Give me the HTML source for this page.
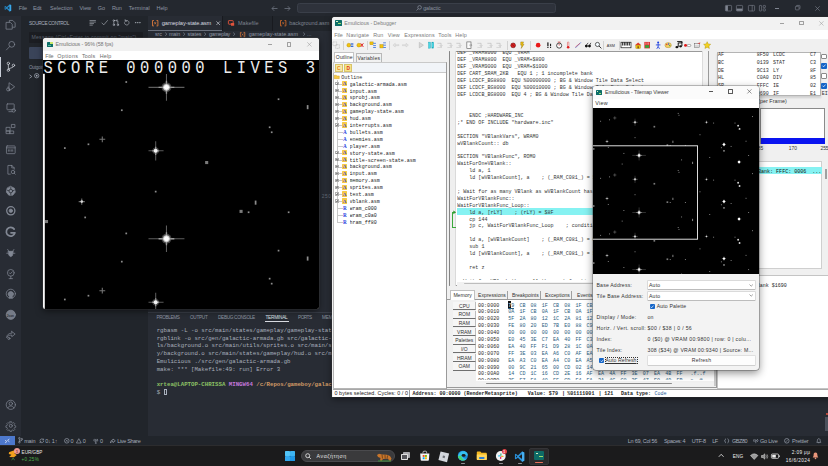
<!DOCTYPE html>
<html lang="en"><head><meta charset="utf-8"><title>Emulicious debugging - galactic-armada</title>
<style>
html,body{margin:0;padding:0;}
body{width:828px;height:466px;overflow:hidden;position:relative;background:#282c34;font-family:"Liberation Sans",sans-serif;}
#root{position:absolute;left:0;top:0;width:828px;height:466px;overflow:hidden;}
#root div,#root span,#root svg{position:absolute;display:block;white-space:pre;box-sizing:border-box;}
#root svg{overflow:visible;}
#root svg text{white-space:pre;}
.clip{overflow:hidden;}
</style></head><body><div id="root">
<div style="left:0px;top:0px;width:828px;height:466px;background:#282c34;"></div>
<div style="left:0px;top:0px;width:828px;height:16px;background:#24282f;"></div>
<div style="left:0px;top:16px;width:21px;height:420px;background:#282c34;"></div>
<div style="left:21px;top:16px;width:127px;height:420px;background:#21252b;"></div>
<div style="left:148px;top:16px;width:680px;height:14.5px;background:#21252b;"></div>
<div style="left:148px;top:30.5px;width:680px;height:8px;background:#282c34;"></div>
<svg style="left:4px;top:3.9px;" width="7.8" height="7.8" viewBox="0 0 24 24"><path d="M17.2 1.2 8.3 9.4 4 6.1 2 7.1v9.8l2 1 4.3-3.3 8.9 8.2 4.8-2V3.2z" fill="#2489ca"/><path d="M17.2 6.8 10.6 12l6.6 5.2zM4.2 9.3v5.4L7 12z" fill="#24282f"/><path d="M17.2 1.2 22 3.2v17.6l-4.8 2z" fill="#3aa8ea"/></svg>
<span style="top:4.99px;line-height:7.15px;height:7.15px;font-size:5.5px;color:#8e95a3;letter-spacing:-0.19px;left:18.8px;">File</span>
<span style="top:4.99px;line-height:7.15px;height:7.15px;font-size:5.5px;color:#8e95a3;letter-spacing:-0.29px;left:33px;">Edit</span>
<span style="top:4.99px;line-height:7.15px;height:7.15px;font-size:5.5px;color:#8e95a3;letter-spacing:-0.01px;left:50px;">Selection</span>
<span style="top:4.99px;line-height:7.15px;height:7.15px;font-size:5.5px;color:#8e95a3;letter-spacing:-0.08px;left:79.5px;">View</span>
<span style="top:4.99px;line-height:7.15px;height:7.15px;font-size:5.5px;color:#8e95a3;letter-spacing:-0.17px;left:97.8px;">Go</span>
<span style="top:4.99px;line-height:7.15px;height:7.15px;font-size:5.5px;color:#8e95a3;letter-spacing:-0.2px;left:112px;">Run</span>
<span style="top:4.99px;line-height:7.15px;height:7.15px;font-size:5.5px;color:#8e95a3;letter-spacing:0.03px;left:128.8px;">Terminal</span>
<span style="top:4.99px;line-height:7.15px;height:7.15px;font-size:5.5px;color:#8e95a3;letter-spacing:-0.08px;left:156.5px;">Help</span>
<svg style="left:270.5px;top:4.5px;" width="7" height="7" viewBox="0 0 7 7"><path d="M6.5 3.5H1M3.2 1.2 1 3.5l2.2 2.3" fill="none" stroke="#6d7380" stroke-width=".8"/></svg>
<svg style="left:283.5px;top:4.5px;" width="7" height="7" viewBox="0 0 7 7"><path d="M.5 3.5H6M3.8 1.2 6 3.5 3.8 5.8" fill="none" stroke="#6d7380" stroke-width=".8"/></svg>
<div style="left:297px;top:2.6px;width:258.5px;height:10.6px;background:#2e323b;border-radius:2.6px;border:.5px solid #3a3f49;"></div>
<svg style="left:416.4px;top:5px;" width="6" height="6" viewBox="0 0 6 6"><circle cx="3.6" cy="2.4" r="1.8" fill="none" stroke="#8b92a0" stroke-width=".7"/><path d="M2.3 3.7.5 5.5" stroke="#8b92a0" stroke-width=".7"/></svg>
<span style="top:4.99px;line-height:6.89px;height:6.89px;font-size:5.3px;color:#8b92a0;letter-spacing:-0.06px;left:423.2px;">galactic</span>
<svg style="left:725.2px;top:4.6px;" width="7" height="6.6" viewBox="0 0 7 6.6"><rect x=".4" y=".4" width="6.2" height="5.6" rx=".8" fill="none" stroke="#7f8591" stroke-width=".6"/><rect x=".6" y=".6" width="2.3" height="5.2" fill="#7f8591"/></svg>
<svg style="left:736.4px;top:4.6px;" width="7" height="6.6" viewBox="0 0 7 6.6"><rect x=".4" y=".4" width="6.2" height="5.6" rx=".8" fill="none" stroke="#7f8591" stroke-width=".6"/><rect x=".6" y="3.6" width="5.8" height="2.2" fill="#7f8591"/></svg>
<svg style="left:747.6px;top:4.6px;" width="7" height="6.6" viewBox="0 0 7 6.6"><rect x=".4" y=".4" width="6.2" height="5.6" rx=".8" fill="none" stroke="#7f8591" stroke-width=".6"/><path d="M4.2.4v5.8" stroke="#7f8591" stroke-width=".6"/></svg>
<svg style="left:758.8px;top:4.6px;" width="7" height="6.6" viewBox="0 0 7 6.6"><rect x=".4" y=".4" width="2.2" height="5.6" rx=".5" fill="none" stroke="#7f8591" stroke-width=".6"/><rect x="4.2" y=".4" width="2.2" height="2.2" rx=".5" fill="none" stroke="#7f8591" stroke-width=".6"/><rect x="4.2" y="3.8" width="2.2" height="2.2" rx=".5" fill="none" stroke="#7f8591" stroke-width=".6"/></svg>
<div style="left:774.8px;top:7.8px;width:4.6px;height:0.6px;background:#7f8591;"></div>
<svg style="left:794.8px;top:5.2px;" width="5.4" height="5.4" viewBox="0 0 5.4 5.4"><rect x=".4" y="1.3" width="3.6" height="3.6" rx=".6" fill="none" stroke="#7f8591" stroke-width=".6"/><path d="M1.5 1.3V.9q0-.5.5-.5h2.5q.5 0 .5.5v2.5q0 .5-.5.5H4.100" fill="none" stroke="#7f8591" stroke-width=".6"/></svg>
<svg style="left:815px;top:5.5px;" width="5" height="5" viewBox="0 0 5 5"><path d="M.3.3 4.7 4.7M4.7.3.3 4.7" stroke="#7f8591" stroke-width=".6"/></svg>
<svg style="left:4.5px;top:19.2px;" width="11.6" height="11.6" viewBox="0 0 24 24"><g fill="none" stroke="#828894" stroke-width="1.5" stroke-linejoin="round" stroke-linecap="round"><path d="M9 6V3h7l5 5v9h-5"/><path d="M3 7h8l4 4v10H3z"/></g></svg>
<svg style="left:4.5px;top:40.2px;" width="11.6" height="11.6" viewBox="0 0 24 24"><g fill="none" stroke="#828894" stroke-width="1.5" stroke-linejoin="round" stroke-linecap="round"><circle cx="14" cy="9" r="6"/><path d="M9.8 13.4 3 20.5"/></g></svg>
<div style="left:0px;top:56.5px;width:1px;height:20.5px;background:#c9ced8;"></div>
<svg style="left:4.5px;top:60.7px;" width="11.6" height="11.6" viewBox="0 0 24 24"><g fill="none" stroke="#d3d7df" stroke-width="1.5" stroke-linejoin="round" stroke-linecap="round"><circle cx="7" cy="5" r="2.5"/><circle cx="7" cy="19" r="2.5"/><circle cx="17.5" cy="9" r="2.5"/><path d="M7 7.5v9M17.5 11.500c0 4-10.500 2-10.500 6"/></g></svg>
<svg style="left:4.5px;top:81.2px;" width="11.6" height="11.6" viewBox="0 0 24 24"><g fill="none" stroke="#828894" stroke-width="1.5" stroke-linejoin="round" stroke-linecap="round"><path d="M9 4l11 8-11 8z"/><circle cx="6.500" cy="17.500" r="3.200"/><path d="M6.500 14.300V12"/></g></svg>
<svg style="left:4.5px;top:102.2px;" width="11.6" height="11.6" viewBox="0 0 24 24"><g fill="none" stroke="#828894" stroke-width="1.5" stroke-linejoin="round" stroke-linecap="round"><rect x="4" y="4" width="15" height="12" rx="1"/><path d="M8 20h7"/><circle cx="18" cy="17.500" r="3.500"/></g></svg>
<svg style="left:4.5px;top:123.2px;" width="11.6" height="11.6" viewBox="0 0 24 24"><g fill="none" stroke="#828894" stroke-width="1.5" stroke-linejoin="round" stroke-linecap="round"><path d="M3 9h7.500v7.500H3zM3 16.500h7.500V22H3zM10.500 16.500H18V22h-7.500z"/><rect x="14" y="3" width="6.500" height="6.500"/></g></svg>
<svg style="left:4.5px;top:143.7px;" width="11.6" height="11.6" viewBox="0 0 24 24"><g fill="none" stroke="#828894" stroke-width="1.5" stroke-linejoin="round" stroke-linecap="round"><rect x="3" y="4" width="18" height="16" rx="1.500"/><path d="M3 8h18M7 15v-3M10 15v-3M13 15v-3M16 15v-3"/></g></svg>
<svg style="left:4.5px;top:164.2px;" width="11.6" height="11.6" viewBox="0 0 24 24"><g fill="none" stroke="#828894" stroke-width="1.5" stroke-linejoin="round" stroke-linecap="round"><path d="M14 3H6v18h5M14 3l5 5v3M14 3v5h5"/><circle cx="16.500" cy="16.500" r="3.500"/><path d="M19 19l2.200 2.200"/></g></svg>
<svg style="left:4.5px;top:185.2px;" width="11.6" height="11.6" viewBox="0 0 24 24"><g fill="none" stroke="#828894" stroke-width="1.5" stroke-linejoin="round" stroke-linecap="round"><path d="M12 3l7.500 3.700 1.800 8-5.100 6.300H7.800L2.700 14.700l1.800-8z" fill="#828894"/><circle cx="12" cy="12.500" r="3.800" stroke="#282c34"/><path d="M12 5v4M12 16v4M5 11l3.500 1M19 11l-3.500 1" stroke="#282c34"/></g></svg>
<svg style="left:4.5px;top:205.2px;" width="11.6" height="11.6" viewBox="0 0 24 24"><g fill="none" stroke="#828894" stroke-width="1.5" stroke-linejoin="round" stroke-linecap="round"><circle cx="12" cy="12" r="8.500" stroke-width="2.600"/><circle cx="12" cy="12" r="3.600" fill="#828894"/></g></svg>
<svg style="left:4.5px;top:225.7px;" width="11.6" height="11.6" viewBox="0 0 24 24"><g fill="none" stroke="#828894" stroke-width="1.5" stroke-linejoin="round" stroke-linecap="round"><path d="M19 6.500A9 9 0 1 0 20.500 14H12.500" stroke-width="3.600"/></g></svg>
<svg style="left:4.5px;top:247.2px;" width="11.6" height="11.6" viewBox="0 0 24 24"><g fill="none" stroke="#828894" stroke-width="1.5" stroke-linejoin="round" stroke-linecap="round"><path d="M7 9h10l-1.500 8.500L12 20l-3.500-2.500z" fill="#828894"/><path d="M8 9 5.500 5M16 9l2.500-4M7 13H3.500M17 13h3.500"/></g></svg>
<svg style="left:4.5px;top:267.7px;" width="11.6" height="11.6" viewBox="0 0 24 24"><g fill="none" stroke="#828894" stroke-width="1.5" stroke-linejoin="round" stroke-linecap="round"><circle cx="12" cy="10" r="7"/><path d="M9 10l2 2.200 4-4.400M12 17v5M8.500 22h7"/></g></svg>
<svg style="left:4.5px;top:288.2px;" width="11.6" height="11.6" viewBox="0 0 24 24"><g fill="none" stroke="#828894" stroke-width="1.5" stroke-linejoin="round" stroke-linecap="round"><circle cx="12" cy="12" r="9.500"/><path d="M9 21v-4c-1.500-1-2.500-2.500-2.500-4.500 0-3 2.500-5 5.500-5s5.500 2 5.500 5c0 2-1 3.500-2.500 4.500v4" fill="#757b87"/></g></svg>
<svg style="left:4.5px;top:309.2px;" width="11.6" height="11.6" viewBox="0 0 24 24"><g fill="none" stroke="#828894" stroke-width="1.5" stroke-linejoin="round" stroke-linecap="round"><circle cx="12" cy="12" r="9.500" fill="#757b87"/></g></svg>
<span style="top:314.5px;line-height:3.9px;height:3.9px;font-size:3px;color:#282c34;font-weight:700;left:6.8px;">Json</span>
<svg style="left:4.5px;top:329.2px;" width="11.6" height="11.6" viewBox="0 0 24 24"><g fill="none" stroke="#828894" stroke-width="1.5" stroke-linejoin="round" stroke-linecap="round"><path d="M14 5l7 5.500-7 5.500v-3.500c-6 0-9 2-10.500 5.500C3.500 12 8 8.500 14 8.500z"/><circle cx="8" cy="19.500" r="2.300"/></g></svg>
<svg style="left:4.5px;top:398.7px;" width="11.6" height="11.6" viewBox="0 0 24 24"><g fill="none" stroke="#828894" stroke-width="1.5" stroke-linejoin="round" stroke-linecap="round"><circle cx="12" cy="12" r="9.500"/><circle cx="12" cy="9.500" r="3.500"/><path d="M5.500 18.500c1.500-3 4-4 6.500-4s5 1 6.500 4"/></g></svg>
<svg style="left:4.5px;top:419.5px;" width="11.6" height="11.6" viewBox="0 0 24 24"><g fill="none" stroke="#828894" stroke-width="1.5" stroke-linejoin="round" stroke-linecap="round"><circle cx="12" cy="12" r="3.200"/><path d="M10.300 2.500h3.400l.6 2.700 2.100.9 2.400-1.500 2.400 2.400-1.500 2.400.9 2.100 2.700.6v3.400l-2.700.6-.9 2.100 1.500 2.400-2.400 2.400-2.400-1.500-2.100.9-.6 2.700h-3.400l-.6-2.700-2.100-.9-2.400 1.500-2.400-2.400 1.500-2.400-.9-2.100-2.700-.600v-3.400l2.700-.6.9-2.100-1.500-2.400 2.400-2.400 2.400 1.500 2.100-.9z" transform="translate(1.200 1.200) scale(.9)"/></g></svg>
<span style="top:21.19px;line-height:6.24px;height:6.24px;font-size:4.8px;color:#a7aebb;letter-spacing:-0.38px;left:29px;">SOURCE CONTROL</span>
<svg style="left:89.3px;top:19.4px;" width="7.4" height="7.4" viewBox="0 0 24 24"><g fill="none" stroke="#c0c5ce" stroke-width="1.8" stroke-linecap="round" stroke-linejoin="round"><path d="M3 5h18M3 10h18M3 15h12M3 20h8"/></g></svg>
<svg style="left:100.6px;top:19.4px;" width="7.4" height="7.4" viewBox="0 0 24 24"><g fill="none" stroke="#c0c5ce" stroke-width="1.8" stroke-linecap="round" stroke-linejoin="round"><path d="M3 13l6 6L21 5"/></g></svg>
<svg style="left:111.8px;top:19.4px;" width="7.4" height="7.4" viewBox="0 0 24 24"><g fill="none" stroke="#c0c5ce" stroke-width="1.8" stroke-linecap="round" stroke-linejoin="round"><circle cx="6" cy="5" r="2.500"/><circle cx="6" cy="19" r="2.500"/><path d="M6 7.500v9M13 5h4q2 0 2 2v9M16 2l-3 3 3 3"/><circle cx="19" cy="19" r="2.500"/></g></svg>
<svg style="left:123.1px;top:19.4px;" width="7.4" height="7.4" viewBox="0 0 24 24"><g fill="none" stroke="#c0c5ce" stroke-width="1.8" stroke-linecap="round" stroke-linejoin="round"><path d="M4.500 12a7.500 7.500 0 1 0 2.200-5.300M7 2v5h5"/></g></svg>
<svg style="left:134.3px;top:19.4px;" width="7.4" height="7.4" viewBox="0 0 24 24"><g fill="none" stroke="#c0c5ce" stroke-width="1.8" stroke-linecap="round" stroke-linejoin="round"><circle cx="5" cy="12" r=".8"/><circle cx="12" cy="12" r=".8"/><circle cx="19" cy="12" r=".8"/></g></svg>
<div style="left:29px;top:32px;width:114px;height:10.5px;background:#1b1d22;border-radius:1px;"></div>
<span style="top:34.48px;line-height:6.76px;height:6.76px;font-size:5.2px;color:#5c6370;letter-spacing:0.2px;left:31.5px;">Message (Ctrl+Enter to commit on "main")</span>
<div style="left:29px;top:47px;width:114px;height:12.4px;background:#3a4459;border-radius:1px;"></div>
<span style="top:65.29px;line-height:5.98px;height:5.98px;font-size:4.6px;color:#8b92a0;letter-spacing:-0.21px;left:29px;">Outgoing</span>
<svg style="left:27.5px;top:73.5px;" width="5" height="5" viewBox="0 0 5 5"><path d="M1.500.800 3.800 2.500 1.500 4.200" fill="none" stroke="#a7aebb" stroke-width=".7"/></svg>
<svg style="left:34.2px;top:73.4px;" width="5.4" height="5.4" viewBox="0 0 5.4 5.4"><circle cx="2.700" cy="2.700" r="2.200" fill="none" stroke="#a7aebb" stroke-width=".7"/><circle cx="2.700" cy="2.700" r=".9" fill="#a7aebb"/></svg>
<div style="left:148px;top:16px;width:73.5px;height:14.5px;background:#282c34;"></div>
<svg style="left:151.8px;top:20.2px;" width="6.4" height="6.4" viewBox="0 0 6.4 6.4"><path d="M1.900.500H.500V5.900H1.900M4.500.500H5.900V5.900H4.500" fill="none" stroke="#dd7a3c" stroke-width=".9"/><path d="M2.300 2.100 4.100 4.300M4.100 2.100 2.300 4.300" stroke="#dd7a3c" stroke-width=".7"/></svg>
<span style="top:20.29px;line-height:7.41px;height:7.41px;font-size:5.7px;color:#d7dae0;letter-spacing:-0.1px;left:161.8px;">gameplay-state.asm</span>
<svg style="left:215.6px;top:21.2px;" width="4.4" height="4.4" viewBox="0 0 4.4 4.4"><path d="M.4.4 4 4M4 .4.4 4" stroke="#c5cad3" stroke-width=".7"/></svg>
<div style="left:221.5px;top:16px;width:0.5px;height:14.5px;background:#181a1f;"></div>
<div style="left:148px;top:29.8px;width:73.5px;height:0.7px;background:#6b717d;"></div>
<svg style="left:228px;top:20.4px;" width="6.4" height="6" viewBox="0 0 6.4 6"><rect x=".4" y=".6" width="4.800" height="3.600" rx=".5" fill="none" stroke="#e0533c" stroke-width=".9"/><rect x="3" y="3" width="3.200" height="2.800" rx=".4" fill="#e0533c"/></svg>
<span style="top:20.29px;line-height:7.15px;height:7.15px;font-size:5.5px;color:#7d838f;letter-spacing:0px;left:238px;">Makefile</span>
<div style="left:272.3px;top:16px;width:0.5px;height:14.5px;background:#181a1f;"></div>
<svg style="left:280.3px;top:20.2px;" width="6.4" height="6.4" viewBox="0 0 6.4 6.4"><path d="M1.900.500H.500V5.900H1.900M4.500.500H5.900V5.900H4.500" fill="none" stroke="#c4662b" stroke-width=".9"/><path d="M2.300 2.100 4.100 4.300M4.100 2.100 2.300 4.300" stroke="#c4662b" stroke-width=".7"/></svg>
<span style="top:20.29px;line-height:7.15px;height:7.15px;font-size:5.5px;color:#7d838f;letter-spacing:-0.05px;left:289.3px;">background.asm</span>
<span style="top:31.49px;line-height:7.02px;height:7.02px;font-size:5.4px;color:#979eab;letter-spacing:-0.13px;left:155px;">src</span>
<span style="top:31.49px;line-height:7.02px;height:7.02px;font-size:5.4px;color:#979eab;letter-spacing:-0.18px;left:169px;">main</span>
<span style="top:31.49px;line-height:7.02px;height:7.02px;font-size:5.4px;color:#979eab;letter-spacing:-0.07px;left:187.5px;">states</span>
<span style="top:31.49px;line-height:7.02px;height:7.02px;font-size:5.4px;color:#979eab;letter-spacing:-0.3px;left:209px;">gameplay</span>
<svg style="left:163.6px;top:32.4px;" width="4" height="4.4" viewBox="0 0 4 4.4"><path d="M1.200.600 3 2.200 1.200 3.800" fill="none" stroke="#8b92a0" stroke-width=".6"/></svg>
<svg style="left:181.8px;top:32.4px;" width="4" height="4.4" viewBox="0 0 4 4.4"><path d="M1.200.600 3 2.200 1.200 3.800" fill="none" stroke="#8b92a0" stroke-width=".6"/></svg>
<svg style="left:203.2px;top:32.4px;" width="4" height="4.4" viewBox="0 0 4 4.4"><path d="M1.200.600 3 2.200 1.200 3.800" fill="none" stroke="#8b92a0" stroke-width=".6"/></svg>
<svg style="left:231.7px;top:32.4px;" width="4" height="4.4" viewBox="0 0 4 4.4"><path d="M1.200.600 3 2.200 1.200 3.800" fill="none" stroke="#8b92a0" stroke-width=".6"/></svg>
<svg style="left:302px;top:32.4px;" width="4" height="4.4" viewBox="0 0 4 4.4"><path d="M1.200.600 3 2.200 1.200 3.800" fill="none" stroke="#8b92a0" stroke-width=".6"/></svg>
<svg style="left:240.3px;top:32px;" width="5.2" height="5.2" viewBox="0 0 5.2 5.2"><path d="M1.600.400H.400V4.800H1.600M3.600.400H4.800V4.800H3.600" fill="none" stroke="#dd7a3c" stroke-width=".8"/><path d="M1.900 1.700 3.300 3.500M3.300 1.700 1.900 3.500" stroke="#dd7a3c" stroke-width=".6"/></svg>
<span style="top:31.49px;line-height:7.02px;height:7.02px;font-size:5.4px;color:#979eab;letter-spacing:0.05px;left:248.7px;">gameplay-state.asm</span>
<span style="top:31.48px;line-height:6.76px;height:6.76px;font-size:5.2px;color:#8b92a0;left:307px;">...</span>
<span style="top:194.49px;line-height:6.24px;height:6.24px;font-size:4.8px;color:#666d79;letter-spacing:0.5px;left:321.8px;">250</span>
<div style="left:148px;top:311.6px;width:680px;height:0.5px;background:#3a3f49;"></div>
<span style="top:315.19px;line-height:6.11px;height:6.11px;font-size:4.7px;color:#8f96a3;letter-spacing:-0.41px;left:156.6px;">PROBLEMS</span>
<span style="top:315.19px;line-height:6.11px;height:6.11px;font-size:4.7px;color:#8f96a3;letter-spacing:-0.3px;left:190px;">OUTPUT</span>
<span style="top:315.19px;line-height:6.11px;height:6.11px;font-size:4.7px;color:#8f96a3;letter-spacing:-0.31px;left:218px;">DEBUG CONSOLE</span>
<span style="top:315.19px;line-height:6.11px;height:6.11px;font-size:4.7px;color:#dfe2e8;letter-spacing:-0.2px;left:265.4px;">TERMINAL</span>
<span style="top:315.19px;line-height:6.11px;height:6.11px;font-size:4.7px;color:#8f96a3;letter-spacing:-0.5px;left:298px;">PORTS</span>
<span style="top:315.19px;line-height:6.11px;height:6.11px;font-size:4.7px;color:#8f96a3;letter-spacing:-0.18px;left:322px;">MEMORY</span>
<div style="left:264.5px;top:321px;width:24px;height:0.6px;background:#d7dae0;"></div>
<span style="top:326.9px;line-height:7.44px;height:7.44px;font-size:5.72px;color:#a9b0bd;font-family:'Liberation Mono',monospace;left:156.7px;">rgbasm -L -o src/main/states/gameplay/gameplay-state.asm -o src/gen/obj</span>
<span style="top:334.66px;line-height:7.44px;height:7.44px;font-size:5.72px;color:#a9b0bd;font-family:'Liberation Mono',monospace;left:156.7px;">rgblink -o src/gen/galactic-armada.gb src/galactic-armada.o src/main</span>
<span style="top:342.42px;line-height:7.44px;height:7.44px;font-size:5.72px;color:#a9b0bd;font-family:'Liberation Mono',monospace;left:156.7px;">ls/background.o src/main/utils/sprites.o src/main/states/story/story</span>
<span style="top:350.18px;line-height:7.44px;height:7.44px;font-size:5.72px;color:#a9b0bd;font-family:'Liberation Mono',monospace;left:156.7px;">y/background.o src/main/states/gameplay/hud.o src/main/states/gameplay</span>
<span style="top:357.94px;line-height:7.44px;height:7.44px;font-size:5.72px;color:#a9b0bd;font-family:'Liberation Mono',monospace;left:156.7px;">Emulicious ./src/gen/galactic-armada.gb</span>
<span style="top:365.7px;line-height:7.44px;height:7.44px;font-size:5.72px;color:#a9b0bd;font-family:'Liberation Mono',monospace;left:156.7px;">make: *** [Makefile:49: run] Error 3</span>
<span style="top:381.31px;line-height:7.44px;height:7.44px;font-size:5.72px;color:#8cc265;font-family:'Liberation Mono',monospace;font-weight:700;left:156.7px;">xrtea@LAPTOP-CHRISSA</span>
<span style="top:381.31px;line-height:7.44px;height:7.44px;font-size:5.72px;color:#c678dd;font-family:'Liberation Mono',monospace;font-weight:700;left:225.36px;"> MINGW64</span>
<span style="top:381.31px;line-height:7.44px;height:7.44px;font-size:5.72px;color:#d19a66;font-family:'Liberation Mono',monospace;font-weight:700;left:252.82px;"> /c/Repos/gameboy/galactic-armada</span>
<span style="top:381.31px;line-height:7.44px;height:7.44px;font-size:5.72px;color:#56b6c2;font-family:'Liberation Mono',monospace;font-weight:700;left:366.11px;"> (main)</span>
<span style="top:388.98px;line-height:7.44px;height:7.44px;font-size:5.72px;color:#a9b0bd;font-family:'Liberation Mono',monospace;left:156.7px;">$ </span>
<div style="left:163.6px;top:388.6px;width:3px;height:6.5px;border:.6px solid #a9b0bd;"></div>
<div style="left:825.3px;top:417px;width:2.7px;height:14px;background:#4b515c;"></div>
<div style="left:825.8px;top:412.8px;width:2.2px;height:2.2px;background:#e0533c;border-radius:50%;"></div>
<div style="left:0px;top:435.6px;width:828px;height:9.9px;background:#21252b;"></div>
<div style="left:0px;top:435.6px;width:14.8px;height:9.9px;background:#4d78cc;"></div>
<svg style="left:4.2px;top:437.6px;" width="6.4" height="6" viewBox="0 0 6.4 6"><path d="M1 2.200 2.900 3.600 1 5M5.400 1 3.500 2.400 5.400 3.800" fill="none" stroke="#e6ecf7" stroke-width=".7"/></svg>
<svg style="left:17.6px;top:437.4px;" width="5" height="6.4" viewBox="0 0 5 6.4"><g fill="none" stroke="#a4abb8" stroke-width=".6"><circle cx="1.400" cy="1.200" r=".8"/><circle cx="1.400" cy="5.200" r=".8"/><circle cx="3.800" cy="2.200" r=".8"/><path d="M1.400 2v2.400M3.800 3c0 1.200-2.400.6-2.400 1.600"/></g></svg>
<span style="top:437.59px;line-height:7.15px;height:7.15px;font-size:5.5px;color:#a4abb8;letter-spacing:-0.16px;left:24.2px;">main</span>
<svg style="left:38.6px;top:437.8px;" width="5.6" height="5.6" viewBox="0 0 5.6 5.6"><path d="M.900 2.800a1.900 1.900 0 0 1 3.500-1M4.700 2.800a1.900 1.900 0 0 1-3.500 1M4.600.600v1.300H3.300M1 5V3.700h1.300" fill="none" stroke="#a4abb8" stroke-width=".6"/></svg>
<span style="top:437.59px;line-height:7.15px;height:7.15px;font-size:5.5px;color:#a4abb8;letter-spacing:-0.23px;left:45.2px;">0↓ 1↑</span>
<svg style="left:63.8px;top:437.8px;" width="5.6" height="5.6" viewBox="0 0 5.6 5.6"><circle cx="2.800" cy="2.800" r="2.300" fill="none" stroke="#a4abb8" stroke-width=".6"/><path d="M1.900 1.900 3.700 3.700M3.700 1.900 1.900 3.700" stroke="#a4abb8" stroke-width=".5"/></svg>
<span style="top:437.59px;line-height:7.15px;height:7.15px;font-size:5.5px;color:#a4abb8;left:70.5px;">0</span>
<svg style="left:75.7px;top:437.8px;" width="5.6" height="5.6" viewBox="0 0 5.6 5.6"><path d="M2.800.700 5.200 5H.4z" fill="none" stroke="#a4abb8" stroke-width=".6"/></svg>
<span style="top:437.59px;line-height:7.15px;height:7.15px;font-size:5.5px;color:#a4abb8;left:82.8px;">0</span>
<svg style="left:92.6px;top:437.8px;" width="5.6" height="5.6" viewBox="0 0 5.6 5.6"><g fill="none" stroke="#a4abb8" stroke-width=".6"><circle cx="2.800" cy="2.200" r=".7"/><path d="M1.400 3.500a2 2 0 0 1 0-2.600M4.200 3.500a2 2 0 0 0 0-2.600M2.800 3v2.200M1.900 5.200h1.800"/></g></svg>
<span style="top:437.59px;line-height:7.15px;height:7.15px;font-size:5.5px;color:#a4abb8;left:100px;">0</span>
<svg style="left:109.6px;top:437.8px;" width="5.6" height="5.6" viewBox="0 0 5.6 5.6"><path d="M3 1 5.300 2.800 3 4.600V3.500C1.500 3.500.8 4.200.5 5 .5 3 1.500 2 3 2z" fill="none" stroke="#a4abb8" stroke-width=".6"/></svg>
<span style="top:437.59px;line-height:7.15px;height:7.15px;font-size:5.5px;color:#a4abb8;letter-spacing:-0.31px;left:117.2px;">Live Share</span>
<span style="top:437.59px;line-height:7.15px;height:7.15px;font-size:5.5px;color:#a4abb8;letter-spacing:-0.26px;left:627.8px;">Ln 69, Col 56</span>
<span style="top:437.59px;line-height:7.15px;height:7.15px;font-size:5.5px;color:#a4abb8;letter-spacing:-0.35px;left:664px;">Spaces: 4</span>
<span style="top:437.59px;line-height:7.15px;height:7.15px;font-size:5.5px;color:#a4abb8;letter-spacing:-0.32px;left:691.8px;">UTF-8</span>
<span style="top:437.59px;line-height:7.15px;height:7.15px;font-size:5.5px;color:#a4abb8;letter-spacing:-0.61px;left:712.3px;">LF</span>
<svg style="left:723.7px;top:437.8px;" width="5.6" height="5.6" viewBox="0 0 5.6 5.6"><g fill="none" stroke="#a4abb8" stroke-width=".6"><path d="M2 .6C1 .6 1.600 2.800.5 2.800 1.600 2.800 1 5 2 5M3.600.600C4.600.600 4 2.800 5.100 2.800 4 2.800 4.600 5 3.600 5"/></g></svg>
<span style="top:437.59px;line-height:7.15px;height:7.15px;font-size:5.5px;color:#a4abb8;letter-spacing:-0.44px;left:732px;">GBZ80</span>
<svg style="left:752.6px;top:437.8px;" width="5.6" height="5.6" viewBox="0 0 5.6 5.6"><g fill="none" stroke="#a4abb8" stroke-width=".6"><circle cx="2.800" cy="2.500" r=".7"/><path d="M1.300 4a2.200 2.200 0 0 1 0-3M4.300 4a2.200 2.200 0 0 0 0-3M2.800 3.200v2"/></g></svg>
<span style="top:437.59px;line-height:7.15px;height:7.15px;font-size:5.5px;color:#a4abb8;letter-spacing:-0.21px;left:760px;">Go Live</span>
<svg style="left:783.8px;top:437.8px;" width="5.6" height="5.6" viewBox="0 0 5.6 5.6"><circle cx="2.800" cy="2.800" r="2.300" fill="none" stroke="#a4abb8" stroke-width=".6"/><path d="M1.500 4.100 4.100 1.500" stroke="#a4abb8" stroke-width=".5"/></svg>
<span style="top:437.59px;line-height:7.15px;height:7.15px;font-size:5.5px;color:#a4abb8;letter-spacing:-0.15px;left:792px;">Prettier</span>
<svg style="left:815.8px;top:437.8px;" width="5.6" height="5.6" viewBox="0 0 5.6 5.6"><path d="M2.800.700C1.600.700 1.400 1.800 1.400 2.800 1.400 3.800.800 4.200.800 4.400H4.800C4.800 4.200 4.200 3.800 4.200 2.800 4.200 1.800 4 .700 2.800.700zM2.300 4.800h1" fill="none" stroke="#a4abb8" stroke-width=".6"/></svg>
<div style="left:332.2px;top:16.8px;width:500px;height:380.4px;background:#f0f0f0;box-shadow:0 2px 7px rgba(0,0,0,.5),0 0 0 .5px rgba(70,70,70,.7);border-radius:3px 0 0 0;"></div>
<div style="left:332.2px;top:16.8px;width:500px;height:13.4px;background:#f2f2f2;border-radius:3px 0 0 0;"></div>
<div style="left:332.2px;top:30.2px;width:500px;height:9px;background:#ffffff;"></div>
<div style="left:335.3px;top:20.2px;width:6.4px;height:5.6px;background:#0d6e68;border-radius:.6px;"></div>
<div style="left:336.3px;top:21.2px;width:1.5px;height:1.1px;background:#d9efc4;"></div>
<div style="left:338.3px;top:23.2px;width:2.5px;height:0.9px;background:#9fdc6a;"></div>
<span style="top:20.18px;line-height:6.76px;height:6.76px;font-size:5.2px;color:#7c7c7c;letter-spacing:-0.03px;left:344.3px;">Emulicious - Debugger</span>
<div style="left:779.5px;top:23px;width:4.8px;height:0.55px;background:#a0a0a0;"></div>
<div style="left:799px;top:20.6px;width:4.8px;height:4.8px;border:.5px solid #a0a0a0;border-radius:.5px;"></div>
<svg style="left:819px;top:20.6px;" width="4.8" height="4.8" viewBox="0 0 4.8 4.8"><path d="M.3.3 4.500 4.500M4.500.3.3 4.500" stroke="#9a9a9a" stroke-width=".55"/></svg>
<span style="top:31.59px;line-height:7.02px;height:7.02px;font-size:5.4px;color:#7a7a7a;letter-spacing:-0.05px;left:334.2px;">File</span>
<span style="top:31.59px;line-height:7.02px;height:7.02px;font-size:5.4px;color:#7a7a7a;letter-spacing:0.21px;left:346.3px;">Navigate</span>
<span style="top:31.59px;line-height:7.02px;height:7.02px;font-size:5.4px;color:#7a7a7a;letter-spacing:0.03px;left:373.3px;">Run</span>
<span style="top:31.59px;line-height:7.02px;height:7.02px;font-size:5.4px;color:#7a7a7a;letter-spacing:0.1px;left:387.8px;">View</span>
<span style="top:31.59px;line-height:7.02px;height:7.02px;font-size:5.4px;color:#7a7a7a;letter-spacing:0.1px;left:404.3px;">Expressions</span>
<span style="top:31.59px;line-height:7.02px;height:7.02px;font-size:5.4px;color:#7a7a7a;letter-spacing:0.14px;left:438.3px;">Tools</span>
<span style="top:31.59px;line-height:7.02px;height:7.02px;font-size:5.4px;color:#7a7a7a;letter-spacing:0.1px;left:455.3px;">Help</span>
<svg style="left:332.25px;top:41.05px;" width="8.3" height="8.3" viewBox="0 0 18 18"><rect x="2" y="2" width="8" height="8" fill="none" stroke="#a8a8a8" stroke-width="1.200" stroke-dasharray="2 1.200"/><rect x="8" y="8" width="8" height="8" fill="none" stroke="#a8a8a8" stroke-width="1.200" stroke-dasharray="2 1.200"/></svg>
<div style="left:342.6px;top:40.5px;width:0.5px;height:9.6px;background:#d2d2d2;"></div>
<svg style="left:346.35px;top:41.05px;" width="8.3" height="8.3" viewBox="0 0 18 18"><circle cx="6" cy="9" r="4" fill="#f2c40f" stroke="#b98b00"/><rect x="10" y="5" width="6" height="3" fill="#3b6fd6"/><rect x="10" y="10" width="6" height="3" fill="#3b6fd6"/></svg>
<svg style="left:356.35px;top:41.05px;" width="8.3" height="8.3" viewBox="0 0 18 18"><circle cx="6" cy="9" r="4" fill="#f2c40f" stroke="#b98b00"/><path d="M10 5l6 8M16 5l-6 8" stroke="#e02020" stroke-width="2"/></svg>
<div style="left:366.5px;top:40.5px;width:0.5px;height:9.6px;background:#d2d2d2;"></div>
<svg style="left:368.85px;top:41.05px;" width="8.3" height="8.3" viewBox="0 0 18 18"><rect x="2" y="2" width="7" height="6" fill="#f2c40f" stroke="#b98b00"/><rect x="9" y="4" width="6" height="2" fill="#4a7fe0"/><rect x="9" y="9" width="6" height="2" fill="#4a7fe0"/><rect x="9" y="13" width="6" height="2" fill="#4a7fe0"/></svg>
<svg style="left:378.85px;top:41.05px;" width="8.3" height="8.3" viewBox="0 0 18 18"><rect x="2" y="8" width="7" height="7" fill="#f2c40f" stroke="#b98b00"/><rect x="9" y="3" width="6" height="2" fill="#4a7fe0"/><rect x="9" y="8" width="6" height="2" fill="#4a7fe0"/><rect x="9" y="13" width="6" height="2" fill="#4a7fe0"/></svg>
<div style="left:388.7px;top:40.5px;width:0.5px;height:9.6px;background:#d2d2d2;"></div>
<svg style="left:391.85px;top:41.05px;" width="8.3" height="8.3" viewBox="0 0 18 18"><path d="M2 9l5-4v3h8v2H7v3z" fill="#e6e6e6" stroke="#bcbcbc" stroke-width=".8"/></svg>
<svg style="left:401.35px;top:41.05px;" width="8.3" height="8.3" viewBox="0 0 18 18"><path d="M16 9l-5-4v3H3v2h8v3z" fill="#e6e6e6" stroke="#bcbcbc" stroke-width=".8"/></svg>
<svg style="left:416.85px;top:41.05px;" width="8.3" height="8.3" viewBox="0 0 18 18"><path d="M5 3l9 6-9 6z" fill="#d8d8d8" stroke="#aaa"/></svg>
<svg style="left:426.65px;top:41.05px;" width="8.3" height="8.3" viewBox="0 0 18 18"><rect x="3.500" y="2.500" width="4" height="13" fill="#49d8e6" stroke="#1fa7b8"/><rect x="10.500" y="2.500" width="4" height="13" fill="#49d8e6" stroke="#1fa7b8"/></svg>
<svg style="left:436.25px;top:41.05px;" width="8.3" height="8.3" viewBox="0 0 18 18"><path d="M3 5h8v7M8 9l3 3 3-3" fill="none" stroke="#b9b9b9" stroke-width="1.400"/><path d="M3 14h10" stroke="#c9c9c9" stroke-width="1.400"/></svg>
<svg style="left:445.85px;top:41.05px;" width="8.3" height="8.3" viewBox="0 0 18 18"><path d="M3 5h8v7M8 9l3 3 3-3" fill="none" stroke="#b9b9b9" stroke-width="1.400"/><path d="M3 14h10" stroke="#c9c9c9" stroke-width="1.400"/></svg>
<svg style="left:455.35px;top:41.05px;" width="8.3" height="8.3" viewBox="0 0 18 18"><path d="M3 5h8v7M8 9l3 3 3-3" fill="none" stroke="#b9b9b9" stroke-width="1.400"/><path d="M3 14h10" stroke="#c9c9c9" stroke-width="1.400"/></svg>
<svg style="left:465.35px;top:41.05px;" width="8.3" height="8.3" viewBox="0 0 18 18"><rect x="4" y="2" width="9" height="14" fill="#fbfbfb" stroke="#555" stroke-width="1.300"/><path d="M9 9h6M12.500 6.500 15 9l-2.500 2.500" fill="none" stroke="#8a8a8a" stroke-width="1.200"/></svg>
<svg style="left:476.45px;top:41.05px;" width="8.3" height="8.3" viewBox="0 0 18 18"><path d="M3 5h8v7M8 9l3 3 3-3" fill="none" stroke="#b9b9b9" stroke-width="1.400"/><path d="M3 14h10" stroke="#c9c9c9" stroke-width="1.400"/></svg>
<svg style="left:485.85px;top:41.05px;" width="8.3" height="8.3" viewBox="0 0 18 18"><path d="M3 5h8v7M8 9l3 3 3-3" fill="none" stroke="#b9b9b9" stroke-width="1.400"/><path d="M3 14h10" stroke="#c9c9c9" stroke-width="1.400"/></svg>
<svg style="left:495.35px;top:41.05px;" width="8.3" height="8.3" viewBox="0 0 18 18"><path d="M3 5h8v7M8 9l3 3 3-3" fill="none" stroke="#b9b9b9" stroke-width="1.400"/><path d="M3 14h10" stroke="#c9c9c9" stroke-width="1.400"/></svg>
<div style="left:506.6px;top:40.5px;width:0.5px;height:9.6px;background:#d2d2d2;"></div>
<svg style="left:508.55px;top:41.05px;" width="8.3" height="8.3" viewBox="0 0 18 18"><circle cx="9" cy="9.500" r="5.200" fill="#d81e1e" stroke="#6a1010" stroke-width="1.200"/><path d="M6 7l6 5" stroke="#6a1010" stroke-width="1.200"/></svg>
<svg style="left:518.35px;top:41.05px;" width="8.3" height="8.3" viewBox="0 0 18 18"><path d="M6 2h6l-2 5h3l-6 9 1.500-7H6z" fill="#f2c40f" stroke="#8a6a00" stroke-width=".9"/></svg>
<div style="left:530.4px;top:40.5px;width:0.5px;height:9.6px;background:#d2d2d2;"></div>
<svg style="left:533.85px;top:41.05px;" width="8.3" height="8.3" viewBox="0 0 18 18"><circle cx="9" cy="9" r="5" fill="#e81818"/></svg>
<svg style="left:544.85px;top:41.05px;" width="8.3" height="8.3" viewBox="0 0 18 18"><rect x="5" y="3" width="2.600" height="8" fill="#111"/><rect x="5" y="12.500" width="2.600" height="2.600" fill="#111"/><rect x="11" y="6" width="2.200" height="5" fill="#111"/><rect x="11" y="12.500" width="2.200" height="2.600" fill="#111"/></svg>
<svg style="left:554.85px;top:41.05px;" width="8.3" height="8.3" viewBox="0 0 18 18"><circle cx="9" cy="10" r="5.500" fill="#fff" stroke="#111" stroke-width="1.600"/><path d="M9 10V6.500M6 2.500h6" stroke="#c01818" stroke-width="1.500"/></svg>
<svg style="left:563.85px;top:41.05px;" width="8.3" height="8.3" viewBox="0 0 18 18"><rect x="7.500" y="2" width="3" height="10" rx="1.500" fill="#fff" stroke="#c22" stroke-width="1"/><circle cx="9" cy="13.500" r="2.800" fill="#e02020"/></svg>
<svg style="left:573.65px;top:41.05px;" width="8.3" height="8.3" viewBox="0 0 18 18"><path d="M3 15 15 3" stroke="#3b5fd6" stroke-width="1.600"/><path d="M3 13 13 5" stroke="#e03030" stroke-width="1.100"/></svg>
<svg style="left:583.85px;top:41.05px;" width="8.3" height="8.3" viewBox="0 0 18 18"><circle cx="5" cy="11" r="3" fill="#111"/><circle cx="12" cy="11" r="3" fill="#111"/><path d="M5 9 9 4M12 9l3-5M7 11h3" stroke="#111" stroke-width="1.500" fill="none"/></svg>
<svg style="left:593.85px;top:41.05px;" width="8.3" height="8.3" viewBox="0 0 18 18"><circle cx="7.500" cy="7.500" r="4.500" fill="#f4fbff" stroke="#222" stroke-width="1.500"/><path d="M11 11l5 5" stroke="#222" stroke-width="2"/></svg>
<div style="left:603.3px;top:40.5px;width:0.5px;height:9.6px;background:#d2d2d2;"></div>
<span style="top:43.8px;line-height:4.94px;height:4.94px;font-size:3.8px;color:#333;left:606.68px;">ASM</span>
<div style="left:618.6px;top:40.5px;width:0.5px;height:9.6px;background:#d2d2d2;"></div>
<svg style="left:621px;top:40.2px;" width="10" height="10" viewBox="0 0 18 18"><rect x="0" y="4" width="18" height="10" fill="#fff" stroke="#111" stroke-width="1.200"/><path d="M3 4v6M6 4v6M9 4v6M12 4v6M15 4v6" stroke="#111" stroke-width="1.700"/></svg>
<svg style="left:633.65px;top:41.05px;" width="8.3" height="8.3" viewBox="0 0 18 18"><path d="M2 9l7-6 7 6z" fill="#e03a2a"/><rect x="4" y="9" width="10" height="7" fill="#f2c40f" stroke="#9a7a00" stroke-width=".8"/><rect x="7.500" y="11.500" width="3" height="4.500" fill="#7a4a10"/></svg>
<svg style="left:643.25px;top:41.05px;" width="8.3" height="8.3" viewBox="0 0 18 18"><rect x="3" y="2" width="12" height="14" fill="#d22" /><rect x="4.500" y="9" width="9" height="6" fill="#3aa03a"/><path d="M6 3v5M9 3v5M12 3v5" stroke="#fff" stroke-width="1"/></svg>
<svg style="left:653.55px;top:41.05px;" width="8.3" height="8.3" viewBox="0 0 18 18"><circle cx="9" cy="3.500" r="2.200" fill="#1a3fe0"/><path d="M9 6v6M9 12l-3 5M9 12l3 5M4 8.500h10" stroke="#1a3fe0" stroke-width="1.800" fill="none"/></svg>
<svg style="left:663.55px;top:41.05px;" width="8.3" height="8.3" viewBox="0 0 18 18"><ellipse cx="9" cy="9" rx="7" ry="5.500" fill="#f4d060" stroke="#9a7a20" stroke-width=".8"/><circle cx="6" cy="7.500" r="1.500" fill="#e03030"/><circle cx="10" cy="6.500" r="1.500" fill="#3050e0"/><circle cx="12.500" cy="10" r="1.500" fill="#30a040"/></svg>
<svg style="left:673.55px;top:40.45px;" width="9.5" height="9.5" viewBox="0 0 18 18"><path d="M6 3h9v2.500H8V13M15 3v8.500" fill="none" stroke="#111" stroke-width="1.800"/><ellipse cx="5.500" cy="13.500" rx="2.800" ry="2.200" fill="#111"/><ellipse cx="12.500" cy="12" rx="2.800" ry="2.200" fill="#111"/></svg>
<svg style="left:683.45px;top:41.05px;" width="8.3" height="8.3" viewBox="0 0 18 18"><circle cx="5.500" cy="9.500" r="3.200" fill="#e01818"/><rect x="9" y="7.500" width="8" height="4.500" rx="2.200" fill="#fff" stroke="#555" stroke-width="1"/></svg>
<svg style="left:693.45px;top:41.05px;" width="8.3" height="8.3" viewBox="0 0 18 18"><rect x="3" y="6" width="11" height="8" fill="#fff" stroke="#555" stroke-width="1"/><path d="M4 9h9M4 11.500h9" stroke="#888" stroke-width=".9"/><path d="M9 5l7-2-1 3z" fill="#e02020"/></svg>
<svg style="left:703.25px;top:41.05px;" width="8.3" height="8.3" viewBox="0 0 18 18"><path d="M9 1.500l2.300 5 5.400.6-4 3.700 1.100 5.400L9 13.500l-4.800 2.700 1.100-5.400-4-3.700 5.400-.6z" fill="#f4d21f" stroke="#a88a00" stroke-width=".9"/></svg>
<div style="left:333px;top:62px;width:114px;height:327px;background:#ffffff;border:.5px solid #b5b5b5;border-right:.8px solid #9a9a9a;"></div>
<div style="left:333px;top:62px;width:113.4px;height:10.8px;background:#f1f4f8;border:.5px solid #c9c9c9;border-right:none;"></div>
<div style="left:334px;top:51.7px;width:20.3px;height:10.5px;background:#ffffff;border:.5px solid #c4c4c4;border-bottom:none;"></div>
<div style="left:355.6px;top:52.7px;width:26.2px;height:9.5px;background:#f1f1f1;border:.5px solid #b8b8b8;border-bottom:none;"></div>
<span style="top:53.99px;line-height:6.63px;height:6.63px;font-size:5.1px;color:#333;letter-spacing:0.12px;left:335.8px;">Outline</span>
<span style="top:54.69px;line-height:6.63px;height:6.63px;font-size:5.1px;color:#333;letter-spacing:0.2px;left:357.5px;">Variables</span>
<div style="left:334.6px;top:64px;width:8.2px;height:7.8px;background:#f7e9a8;border:.5px solid #d8c46a;"></div>
<span style="top:65.99px;line-height:6.24px;height:6.24px;font-size:4.8px;color:#e8820c;font-weight:700;left:336.97px;">C</span>
<div style="left:344.2px;top:64px;width:8.2px;height:7.8px;background:#f7e58a;border:.5px solid #d8c46a;"></div>
<span style="top:65.99px;line-height:6.24px;height:6.24px;font-size:4.8px;color:#e0301a;font-weight:700;left:346.57px;">D</span>
<svg style="left:334.2px;top:74.3px;" width="5.6" height="5" viewBox="0 0 5.6 5"><path d="M.3 1.200h2l.6.700h2.400v2.800H.3z" fill="#f6c945" stroke="#c8981a" stroke-width=".4"/></svg>
<span style="top:74.9px;line-height:6.54px;height:6.54px;font-size:5.03px;color:#333;font-family:'Liberation Mono',monospace;left:341.2px;">Outline</span>
<div style="left:337.1px;top:80px;width:0.4px;height:142px;background:#c8c8c8;"></div>
<div style="left:335.4px;top:82px;width:3.4px;height:3.4px;background:#fff;border:.4px solid #b0b0b0;"></div>
<div style="left:336.2px;top:83.5px;width:1.8px;height:0.4px;background:#888;"></div>
<div style="left:336.9px;top:82.8px;width:0.4px;height:1.8px;background:#888;"></div>
<div style="left:338.8px;top:83.7px;width:3px;height:0.4px;background:#c8c8c8;"></div>
<div style="left:342.2px;top:81px;width:4.8px;height:5.3px;background:#f6c945;border-radius:.5px;"></div>
<span style="top:81.29px;line-height:6.5px;height:6.5px;font-size:5px;color:#2a3fe0;font-weight:700;left:342.79px;font-family:'Liberation Serif',serif;">A</span>
<div class="clip" style="left:349.600px;top:80.2px;width:95.6px;height:7px;">
<span style="top:1.4px;line-height:6.54px;height:6.54px;font-size:5.03px;color:#1c1c1c;font-family:'Liberation Mono',monospace;left:0px;">galactic-armada.asm</span>
</div>
<div style="left:335.4px;top:88.91px;width:3.4px;height:3.4px;background:#fff;border:.4px solid #b0b0b0;"></div>
<div style="left:336.2px;top:90.41px;width:1.8px;height:0.4px;background:#888;"></div>
<div style="left:336.9px;top:89.7px;width:0.4px;height:1.8px;background:#888;"></div>
<div style="left:338.8px;top:90.61px;width:3px;height:0.4px;background:#c8c8c8;"></div>
<div style="left:342.2px;top:87.91px;width:4.8px;height:5.3px;background:#f6c945;border-radius:.5px;"></div>
<span style="top:88.19px;line-height:6.5px;height:6.5px;font-size:5px;color:#2a3fe0;font-weight:700;left:342.79px;font-family:'Liberation Serif',serif;">A</span>
<div class="clip" style="left:349.600px;top:87.11px;width:95.6px;height:7px;">
<span style="top:1.4px;line-height:6.54px;height:6.54px;font-size:5.03px;color:#1c1c1c;font-family:'Liberation Mono',monospace;left:0px;">input.asm</span>
</div>
<div style="left:335.4px;top:95.81px;width:3.4px;height:3.4px;background:#fff;border:.4px solid #b0b0b0;"></div>
<div style="left:336.2px;top:97.31px;width:1.8px;height:0.4px;background:#888;"></div>
<div style="left:336.9px;top:96.61px;width:0.4px;height:1.8px;background:#888;"></div>
<div style="left:338.8px;top:97.51px;width:3px;height:0.4px;background:#c8c8c8;"></div>
<div style="left:342.2px;top:94.81px;width:4.8px;height:5.3px;background:#f6c945;border-radius:.5px;"></div>
<span style="top:95.1px;line-height:6.5px;height:6.5px;font-size:5px;color:#2a3fe0;font-weight:700;left:342.79px;font-family:'Liberation Serif',serif;">A</span>
<div class="clip" style="left:349.600px;top:94.01px;width:95.6px;height:7px;">
<span style="top:1.4px;line-height:6.54px;height:6.54px;font-size:5.03px;color:#1c1c1c;font-family:'Liberation Mono',monospace;left:0px;">sprobj.asm</span>
</div>
<div style="left:335.4px;top:102.72px;width:3.4px;height:3.4px;background:#fff;border:.4px solid #b0b0b0;"></div>
<div style="left:336.2px;top:104.22px;width:1.8px;height:0.4px;background:#888;"></div>
<div style="left:336.9px;top:103.52px;width:0.4px;height:1.8px;background:#888;"></div>
<div style="left:338.8px;top:104.42px;width:3px;height:0.4px;background:#c8c8c8;"></div>
<div style="left:342.2px;top:101.72px;width:4.8px;height:5.3px;background:#f6c945;border-radius:.5px;"></div>
<span style="top:102px;line-height:6.5px;height:6.5px;font-size:5px;color:#2a3fe0;font-weight:700;left:342.79px;font-family:'Liberation Serif',serif;">A</span>
<div class="clip" style="left:349.600px;top:100.92px;width:95.6px;height:7px;">
<span style="top:1.4px;line-height:6.54px;height:6.54px;font-size:5.03px;color:#1c1c1c;font-family:'Liberation Mono',monospace;left:0px;">background.asm</span>
</div>
<div style="left:335.4px;top:109.62px;width:3.4px;height:3.4px;background:#fff;border:.4px solid #b0b0b0;"></div>
<div style="left:336.2px;top:111.12px;width:1.8px;height:0.4px;background:#888;"></div>
<div style="left:336.9px;top:110.42px;width:0.4px;height:1.8px;background:#888;"></div>
<div style="left:338.8px;top:111.32px;width:3px;height:0.4px;background:#c8c8c8;"></div>
<div style="left:342.2px;top:108.62px;width:4.8px;height:5.3px;background:#f6c945;border-radius:.5px;"></div>
<span style="top:108.91px;line-height:6.5px;height:6.5px;font-size:5px;color:#2a3fe0;font-weight:700;left:342.79px;font-family:'Liberation Serif',serif;">A</span>
<div class="clip" style="left:349.600px;top:107.82px;width:95.6px;height:7px;">
<span style="top:1.4px;line-height:6.54px;height:6.54px;font-size:5.03px;color:#1c1c1c;font-family:'Liberation Mono',monospace;left:0px;">gameplay-state.asm</span>
</div>
<div style="left:335.4px;top:116.52px;width:3.4px;height:3.4px;background:#fff;border:.4px solid #b0b0b0;"></div>
<div style="left:336.2px;top:118.02px;width:1.8px;height:0.4px;background:#888;"></div>
<div style="left:336.9px;top:117.32px;width:0.4px;height:1.8px;background:#888;"></div>
<div style="left:338.8px;top:118.22px;width:3px;height:0.4px;background:#c8c8c8;"></div>
<div style="left:342.2px;top:115.52px;width:4.8px;height:5.3px;background:#f6c945;border-radius:.5px;"></div>
<span style="top:115.81px;line-height:6.5px;height:6.5px;font-size:5px;color:#2a3fe0;font-weight:700;left:342.79px;font-family:'Liberation Serif',serif;">A</span>
<div class="clip" style="left:349.600px;top:114.72px;width:95.6px;height:7px;">
<span style="top:1.4px;line-height:6.54px;height:6.54px;font-size:5.03px;color:#1c1c1c;font-family:'Liberation Mono',monospace;left:0px;">hud.asm</span>
</div>
<div style="left:335.4px;top:123.43px;width:3.4px;height:3.4px;background:#fff;border:.4px solid #b0b0b0;"></div>
<div style="left:336.2px;top:124.93px;width:1.8px;height:0.4px;background:#888;"></div>
<div style="left:336.9px;top:124.23px;width:0.4px;height:1.8px;background:#888;"></div>
<div style="left:338.8px;top:125.13px;width:3px;height:0.4px;background:#c8c8c8;"></div>
<div style="left:342.2px;top:122.43px;width:4.8px;height:5.3px;background:#f6c945;border-radius:.5px;"></div>
<span style="top:122.72px;line-height:6.5px;height:6.5px;font-size:5px;color:#2a3fe0;font-weight:700;left:342.79px;font-family:'Liberation Serif',serif;">A</span>
<div class="clip" style="left:349.600px;top:121.63px;width:95.6px;height:7px;">
<span style="top:1.4px;line-height:6.54px;height:6.54px;font-size:5.03px;color:#1c1c1c;font-family:'Liberation Mono',monospace;left:0px;">interrupts.asm</span>
</div>
<div style="left:337.1px;top:132.03px;width:5.5px;height:0.4px;background:#c8c8c8;"></div>
<span style="top:129.19px;line-height:6.76px;height:6.76px;font-size:5.2px;color:#2a3fe0;font-weight:700;left:342.92px;font-family:'Liberation Serif',serif;">A</span>
<div class="clip" style="left:349.600px;top:128.53px;width:95.6px;height:7px;">
<span style="top:1.4px;line-height:6.54px;height:6.54px;font-size:5.03px;color:#1c1c1c;font-family:'Liberation Mono',monospace;left:0px;">bullets.asm</span>
</div>
<div style="left:337.1px;top:138.94px;width:5.5px;height:0.4px;background:#c8c8c8;"></div>
<span style="top:136.09px;line-height:6.76px;height:6.76px;font-size:5.2px;color:#2a3fe0;font-weight:700;left:342.92px;font-family:'Liberation Serif',serif;">A</span>
<div class="clip" style="left:349.600px;top:135.44px;width:95.6px;height:7px;">
<span style="top:1.4px;line-height:6.54px;height:6.54px;font-size:5.03px;color:#1c1c1c;font-family:'Liberation Mono',monospace;left:0px;">enemies.asm</span>
</div>
<div style="left:337.1px;top:145.84px;width:5.5px;height:0.4px;background:#c8c8c8;"></div>
<span style="top:143px;line-height:6.76px;height:6.76px;font-size:5.2px;color:#2a3fe0;font-weight:700;left:342.92px;font-family:'Liberation Serif',serif;">A</span>
<div class="clip" style="left:349.600px;top:142.34px;width:95.6px;height:7px;">
<span style="top:1.4px;line-height:6.54px;height:6.54px;font-size:5.03px;color:#1c1c1c;font-family:'Liberation Mono',monospace;left:0px;">player.asm</span>
</div>
<div style="left:335.4px;top:151.05px;width:3.4px;height:3.4px;background:#fff;border:.4px solid #b0b0b0;"></div>
<div style="left:336.2px;top:152.55px;width:1.8px;height:0.4px;background:#888;"></div>
<div style="left:336.9px;top:151.85px;width:0.4px;height:1.8px;background:#888;"></div>
<div style="left:338.8px;top:152.75px;width:3px;height:0.4px;background:#c8c8c8;"></div>
<div style="left:342.2px;top:150.05px;width:4.8px;height:5.3px;background:#f6c945;border-radius:.5px;"></div>
<span style="top:150.34px;line-height:6.5px;height:6.5px;font-size:5px;color:#2a3fe0;font-weight:700;left:342.79px;font-family:'Liberation Serif',serif;">A</span>
<div class="clip" style="left:349.600px;top:149.25px;width:95.6px;height:7px;">
<span style="top:1.4px;line-height:6.54px;height:6.54px;font-size:5.03px;color:#1c1c1c;font-family:'Liberation Mono',monospace;left:0px;">story-state.asm</span>
</div>
<div style="left:335.4px;top:157.96px;width:3.4px;height:3.4px;background:#fff;border:.4px solid #b0b0b0;"></div>
<div style="left:336.2px;top:159.46px;width:1.8px;height:0.4px;background:#888;"></div>
<div style="left:336.9px;top:158.75px;width:0.4px;height:1.8px;background:#888;"></div>
<div style="left:338.8px;top:159.66px;width:3px;height:0.4px;background:#c8c8c8;"></div>
<div style="left:342.2px;top:156.96px;width:4.8px;height:5.3px;background:#f6c945;border-radius:.5px;"></div>
<span style="top:157.25px;line-height:6.5px;height:6.5px;font-size:5px;color:#2a3fe0;font-weight:700;left:342.79px;font-family:'Liberation Serif',serif;">A</span>
<div class="clip" style="left:349.600px;top:156.16px;width:95.6px;height:7px;">
<span style="top:1.4px;line-height:6.54px;height:6.54px;font-size:5.03px;color:#1c1c1c;font-family:'Liberation Mono',monospace;left:0px;">title-screen-state.asm</span>
</div>
<div style="left:335.4px;top:164.86px;width:3.4px;height:3.4px;background:#fff;border:.4px solid #b0b0b0;"></div>
<div style="left:336.2px;top:166.36px;width:1.8px;height:0.4px;background:#888;"></div>
<div style="left:336.9px;top:165.66px;width:0.4px;height:1.8px;background:#888;"></div>
<div style="left:338.8px;top:166.56px;width:3px;height:0.4px;background:#c8c8c8;"></div>
<div style="left:342.2px;top:163.86px;width:4.8px;height:5.3px;background:#f6c945;border-radius:.5px;"></div>
<span style="top:164.15px;line-height:6.5px;height:6.5px;font-size:5px;color:#2a3fe0;font-weight:700;left:342.79px;font-family:'Liberation Serif',serif;">A</span>
<div class="clip" style="left:349.600px;top:163.06px;width:95.6px;height:7px;">
<span style="top:1.4px;line-height:6.54px;height:6.54px;font-size:5.03px;color:#1c1c1c;font-family:'Liberation Mono',monospace;left:0px;">background.asm</span>
</div>
<div style="left:335.4px;top:171.77px;width:3.4px;height:3.4px;background:#fff;border:.4px solid #b0b0b0;"></div>
<div style="left:336.2px;top:173.27px;width:1.8px;height:0.4px;background:#888;"></div>
<div style="left:336.9px;top:172.56px;width:0.4px;height:1.8px;background:#888;"></div>
<div style="left:338.8px;top:173.47px;width:3px;height:0.4px;background:#c8c8c8;"></div>
<div style="left:342.2px;top:170.77px;width:4.8px;height:5.3px;background:#f6c945;border-radius:.5px;"></div>
<span style="top:171.06px;line-height:6.5px;height:6.5px;font-size:5px;color:#2a3fe0;font-weight:700;left:342.79px;font-family:'Liberation Serif',serif;">A</span>
<div class="clip" style="left:349.600px;top:169.97px;width:95.6px;height:7px;">
<span style="top:1.4px;line-height:6.54px;height:6.54px;font-size:5.03px;color:#1c1c1c;font-family:'Liberation Mono',monospace;left:0px;">input.asm</span>
</div>
<div style="left:335.4px;top:178.67px;width:3.4px;height:3.4px;background:#fff;border:.4px solid #b0b0b0;"></div>
<div style="left:336.2px;top:180.17px;width:1.8px;height:0.4px;background:#888;"></div>
<div style="left:336.9px;top:179.47px;width:0.4px;height:1.8px;background:#888;"></div>
<div style="left:338.8px;top:180.37px;width:3px;height:0.4px;background:#c8c8c8;"></div>
<div style="left:342.2px;top:177.67px;width:4.8px;height:5.3px;background:#f6c945;border-radius:.5px;"></div>
<span style="top:177.96px;line-height:6.5px;height:6.5px;font-size:5px;color:#2a3fe0;font-weight:700;left:342.79px;font-family:'Liberation Serif',serif;">A</span>
<div class="clip" style="left:349.600px;top:176.87px;width:95.6px;height:7px;">
<span style="top:1.4px;line-height:6.54px;height:6.54px;font-size:5.03px;color:#1c1c1c;font-family:'Liberation Mono',monospace;left:0px;">memory.asm</span>
</div>
<div style="left:335.4px;top:185.58px;width:3.4px;height:3.4px;background:#fff;border:.4px solid #b0b0b0;"></div>
<div style="left:336.2px;top:187.08px;width:1.8px;height:0.4px;background:#888;"></div>
<div style="left:336.9px;top:186.38px;width:0.4px;height:1.8px;background:#888;"></div>
<div style="left:338.8px;top:187.28px;width:3px;height:0.4px;background:#c8c8c8;"></div>
<div style="left:342.2px;top:184.58px;width:4.8px;height:5.3px;background:#f6c945;border-radius:.5px;"></div>
<span style="top:184.87px;line-height:6.5px;height:6.5px;font-size:5px;color:#2a3fe0;font-weight:700;left:342.79px;font-family:'Liberation Serif',serif;">A</span>
<div class="clip" style="left:349.600px;top:183.78px;width:95.6px;height:7px;">
<span style="top:1.4px;line-height:6.54px;height:6.54px;font-size:5.03px;color:#1c1c1c;font-family:'Liberation Mono',monospace;left:0px;">sprites.asm</span>
</div>
<div style="left:335.4px;top:192.48px;width:3.4px;height:3.4px;background:#fff;border:.4px solid #b0b0b0;"></div>
<div style="left:336.2px;top:193.98px;width:1.8px;height:0.4px;background:#888;"></div>
<div style="left:336.9px;top:193.28px;width:0.4px;height:1.8px;background:#888;"></div>
<div style="left:338.8px;top:194.18px;width:3px;height:0.4px;background:#c8c8c8;"></div>
<div style="left:342.2px;top:191.48px;width:4.8px;height:5.3px;background:#f6c945;border-radius:.5px;"></div>
<span style="top:191.77px;line-height:6.5px;height:6.5px;font-size:5px;color:#2a3fe0;font-weight:700;left:342.79px;font-family:'Liberation Serif',serif;">A</span>
<div class="clip" style="left:349.600px;top:190.68px;width:95.6px;height:7px;">
<span style="top:1.4px;line-height:6.54px;height:6.54px;font-size:5.03px;color:#1c1c1c;font-family:'Liberation Mono',monospace;left:0px;">text.asm</span>
</div>
<div style="left:335.4px;top:199.39px;width:3.4px;height:3.4px;background:#fff;border:.4px solid #b0b0b0;"></div>
<div style="left:336.2px;top:200.89px;width:1.8px;height:0.4px;background:#888;"></div>
<div style="left:336.9px;top:200.19px;width:0.4px;height:1.8px;background:#888;"></div>
<div style="left:338.8px;top:201.09px;width:3px;height:0.4px;background:#c8c8c8;"></div>
<div style="left:342.2px;top:198.39px;width:4.8px;height:5.3px;background:#f6c945;border-radius:.5px;"></div>
<span style="top:198.68px;line-height:6.5px;height:6.5px;font-size:5px;color:#2a3fe0;font-weight:700;left:342.79px;font-family:'Liberation Serif',serif;">A</span>
<div class="clip" style="left:349.600px;top:197.59px;width:95.6px;height:7px;">
<span style="top:1.4px;line-height:6.54px;height:6.54px;font-size:5.03px;color:#1c1c1c;font-family:'Liberation Mono',monospace;left:0px;">vblank.asm</span>
</div>
<div style="left:337.1px;top:207.99px;width:5.5px;height:0.4px;background:#c8c8c8;"></div>
<span style="top:205.14px;line-height:6.76px;height:6.76px;font-size:5.2px;color:#2a3fe0;font-weight:700;left:342.92px;font-family:'Liberation Serif',serif;">R</span>
<div class="clip" style="left:349.600px;top:204.49px;width:95.6px;height:7px;">
<span style="top:1.4px;line-height:6.54px;height:6.54px;font-size:5.03px;color:#1c1c1c;font-family:'Liberation Mono',monospace;left:0px;">wram_c000</span>
</div>
<div style="left:337.1px;top:214.89px;width:5.5px;height:0.4px;background:#c8c8c8;"></div>
<span style="top:212.04px;line-height:6.76px;height:6.76px;font-size:5.2px;color:#2a3fe0;font-weight:700;left:342.92px;font-family:'Liberation Serif',serif;">R</span>
<div class="clip" style="left:349.600px;top:211.39px;width:95.6px;height:7px;">
<span style="top:1.4px;line-height:6.54px;height:6.54px;font-size:5.03px;color:#1c1c1c;font-family:'Liberation Mono',monospace;left:0px;">wram_c0a0</span>
</div>
<div style="left:337.1px;top:221.8px;width:5.5px;height:0.4px;background:#c8c8c8;"></div>
<span style="top:218.95px;line-height:6.76px;height:6.76px;font-size:5.2px;color:#2a3fe0;font-weight:700;left:342.92px;font-family:'Liberation Serif',serif;">R</span>
<div class="clip" style="left:349.600px;top:218.3px;width:95.6px;height:7px;">
<span style="top:1.4px;line-height:6.54px;height:6.54px;font-size:5.03px;color:#1c1c1c;font-family:'Liberation Mono',monospace;left:0px;">hram_ff80</span>
</div>
<div style="left:448.7px;top:50.6px;width:260.1px;height:235.9px;background:#ffffff;border:.5px solid #9a9a9a;border-left:1px solid #858585;"></div>
<div style="left:449.7px;top:51.1px;width:6.8px;height:234.9px;background:#efefef;border-right:.4px solid #dadada;"></div>
<div style="left:701.5px;top:51.1px;width:6.8px;height:230px;background:#f3f3f3;border-left:.5px solid #dcdcdc;"></div>
<div style="left:456.8px;top:208.3px;width:244.5px;height:7px;background:#86f2f2;"></div>
<div class="clip" style="left:456.800px;top:51px;width:244.500px;height:229.400px;">
<span style="top:-0.6px;line-height:6.54px;height:6.54px;font-size:5.03px;color:#353535;font-family:'Liberation Mono',monospace;left:0.5px;">DEF _VRAM8000  EQU _VRAM</span>
<span style="top:6.4px;line-height:6.54px;height:6.54px;font-size:5.03px;color:#353535;font-family:'Liberation Mono',monospace;left:0.5px;">DEF _VRAM8800  EQU _VRAM+$800</span>
<span style="top:13.4px;line-height:6.54px;height:6.54px;font-size:5.03px;color:#353535;font-family:'Liberation Mono',monospace;left:0.5px;">DEF _VRAM9000  EQU _VRAM+$1000</span>
<span style="top:20.3px;line-height:6.54px;height:6.54px;font-size:5.03px;color:#353535;font-family:'Liberation Mono',monospace;left:0.5px;">DEF CART_SRAM_2KB   EQU 1 ; 1 incomplete bank</span>
<span style="top:27.2px;line-height:6.54px;height:6.54px;font-size:5.03px;color:#353535;font-family:'Liberation Mono',monospace;left:0.5px;">DEF LCDCF_BG8800  EQU %00000000 ; BG &amp; Window Tile Data Select</span>
<span style="top:34.1px;line-height:6.54px;height:6.54px;font-size:5.03px;color:#353535;font-family:'Liberation Mono',monospace;left:0.5px;">DEF LCDCF_BG8000  EQU %00010000 ; BG &amp; Window Tile Data Select</span>
<span style="top:41.1px;line-height:6.54px;height:6.54px;font-size:5.03px;color:#353535;font-family:'Liberation Mono',monospace;left:0.5px;">DEF LCDCB_BG8000  EQU 4 ; BG &amp; Window Tile Data Select</span>
<span style="top:61.9px;line-height:6.54px;height:6.54px;font-size:5.03px;color:#353535;font-family:'Liberation Mono',monospace;left:0.5px;">    ENDC ;HARDWARE_INC</span>
<span style="top:68.8px;line-height:6.54px;height:6.54px;font-size:5.03px;color:#353535;font-family:'Liberation Mono',monospace;left:0.5px;">;* END OF INCLUDE "hardware.inc"</span>
<span style="top:82.6px;line-height:6.54px;height:6.54px;font-size:5.03px;color:#353535;font-family:'Liberation Mono',monospace;left:0.5px;">SECTION "VBlankVars", WRAM0</span>
<span style="top:89.5px;line-height:6.54px;height:6.54px;font-size:5.03px;color:#353535;font-family:'Liberation Mono',monospace;left:0.5px;">wVBlankCount:: db</span>
<span style="top:103.3px;line-height:6.54px;height:6.54px;font-size:5.03px;color:#353535;font-family:'Liberation Mono',monospace;left:0.5px;">SECTION "VBlankFunc", ROM0</span>
<span style="top:110.2px;line-height:6.54px;height:6.54px;font-size:5.03px;color:#353535;font-family:'Liberation Mono',monospace;left:0.5px;">WaitForOneVBlank::</span>
<span style="top:117.1px;line-height:6.54px;height:6.54px;font-size:5.03px;color:#353535;font-family:'Liberation Mono',monospace;left:0.5px;">    ld a, 1</span>
<span style="top:124px;line-height:6.54px;height:6.54px;font-size:5.03px;color:#353535;font-family:'Liberation Mono',monospace;left:0.5px;">    ld [wVBlankCount], a    ; (_RAM_C081_) = $00</span>
<span style="top:137.8px;line-height:6.54px;height:6.54px;font-size:5.03px;color:#353535;font-family:'Liberation Mono',monospace;left:0.5px;">; Wait for as many VBlank as wVBlankCount has</span>
<span style="top:144.7px;line-height:6.54px;height:6.54px;font-size:5.03px;color:#353535;font-family:'Liberation Mono',monospace;left:0.5px;">WaitForVBlankFunc::</span>
<span style="top:151.6px;line-height:6.54px;height:6.54px;font-size:5.03px;color:#353535;font-family:'Liberation Mono',monospace;left:0.5px;">WaitForVBlankFunc_Loop::</span>
<span style="top:158.6px;line-height:6.54px;height:6.54px;font-size:5.03px;color:#353535;font-family:'Liberation Mono',monospace;left:0.5px;">    ld a, [rLY]    ; (rLY) = $8F</span>
<span style="top:165.5px;line-height:6.54px;height:6.54px;font-size:5.03px;color:#353535;font-family:'Liberation Mono',monospace;left:0.5px;">    cp 144</span>
<span style="top:172.4px;line-height:6.54px;height:6.54px;font-size:5.03px;color:#353535;font-family:'Liberation Mono',monospace;left:0.5px;">    jp c, WaitForVBlankFunc_Loop    ; conditional jump</span>
<span style="top:186.1px;line-height:6.54px;height:6.54px;font-size:5.03px;color:#353535;font-family:'Liberation Mono',monospace;left:0.5px;">    ld a, [wVBlankCount]    ; (_RAM_C081_) = $00</span>
<span style="top:193px;line-height:6.54px;height:6.54px;font-size:5.03px;color:#353535;font-family:'Liberation Mono',monospace;left:0.5px;">    sub 1</span>
<span style="top:199.9px;line-height:6.54px;height:6.54px;font-size:5.03px;color:#353535;font-family:'Liberation Mono',monospace;left:0.5px;">    ld [wVBlankCount], a    ; (_RAM_C081_) = $00</span>
<span style="top:213.7px;line-height:6.54px;height:6.54px;font-size:5.03px;color:#353535;font-family:'Liberation Mono',monospace;left:0.5px;">    ret z</span>
<span style="top:227.6px;line-height:6.54px;height:6.54px;font-size:5.03px;color:#353535;font-family:'Liberation Mono',monospace;left:0.5px;">; Wait for VBlank then call the next function</span>
</div>
<div style="left:451.6px;top:212px;width:0.6px;height:15.8px;background:#3aa83a;"></div>
<div style="left:451.6px;top:227.3px;width:4.8px;height:0.6px;background:#3aa83a;"></div>
<div style="left:451.6px;top:211.7px;width:3px;height:0.6px;background:#3aa83a;"></div>
<svg style="left:453.2px;top:209.5px;" width="3.6" height="4.6" viewBox="0 0 3.6 4.6"><path d="M.3.400 3.200 2.300.3 4.200z" fill="#2e9a2e"/></svg>
<div style="left:456.8px;top:281.6px;width:244.5px;height:4.4px;background:#f1f1f1;"></div>
<div style="left:464px;top:282.6px;width:180px;height:1.6px;background:#bdbdbd;border-radius:.8px;"></div>
<div style="left:717.3px;top:51.5px;width:103.8px;height:44.5px;background:#ffffff;border:.5px solid #b4b4b4;box-shadow:0 1.500px 2px rgba(0,0,0,.14);"></div>
<span style="top:51.9px;line-height:6.54px;height:6.54px;font-size:5.03px;color:#2e2e2e;font-family:'Liberation Mono',monospace;left:718px;">AF</span>
<span style="top:51.9px;line-height:6.54px;height:6.54px;font-size:5.03px;color:#2e2e2e;font-family:'Liberation Mono',monospace;left:756.8px;">8F50</span>
<span style="top:51.9px;line-height:6.54px;height:6.54px;font-size:5.03px;color:#2e2e2e;font-family:'Liberation Mono',monospace;left:773px;">LCDC</span>
<span style="top:51.9px;line-height:6.54px;height:6.54px;font-size:5.03px;color:#2e2e2e;font-family:'Liberation Mono',monospace;left:810px;">C7</span>
<span style="top:59.7px;line-height:6.54px;height:6.54px;font-size:5.03px;color:#2e2e2e;font-family:'Liberation Mono',monospace;left:718px;">BC</span>
<span style="top:59.7px;line-height:6.54px;height:6.54px;font-size:5.03px;color:#2e2e2e;font-family:'Liberation Mono',monospace;left:756.8px;">0139</span>
<span style="top:59.7px;line-height:6.54px;height:6.54px;font-size:5.03px;color:#2e2e2e;font-family:'Liberation Mono',monospace;left:773px;">STAT</span>
<span style="top:59.7px;line-height:6.54px;height:6.54px;font-size:5.03px;color:#2e2e2e;font-family:'Liberation Mono',monospace;left:810px;">C3</span>
<span style="top:67.5px;line-height:6.54px;height:6.54px;font-size:5.03px;color:#2e2e2e;font-family:'Liberation Mono',monospace;left:718px;">DE</span>
<span style="top:67.5px;line-height:6.54px;height:6.54px;font-size:5.03px;color:#2e2e2e;font-family:'Liberation Mono',monospace;left:756.8px;">9C13</span>
<span style="top:67.5px;line-height:6.54px;height:6.54px;font-size:5.03px;color:#2e2e2e;font-family:'Liberation Mono',monospace;left:773px;">LY</span>
<span style="top:67.5px;line-height:6.54px;height:6.54px;font-size:5.03px;color:#2e2e2e;font-family:'Liberation Mono',monospace;left:810px;">8F</span>
<span style="top:75.3px;line-height:6.54px;height:6.54px;font-size:5.03px;color:#2e2e2e;font-family:'Liberation Mono',monospace;left:718px;">HL</span>
<span style="top:75.3px;line-height:6.54px;height:6.54px;font-size:5.03px;color:#2e2e2e;font-family:'Liberation Mono',monospace;left:756.8px;">C0A0</span>
<span style="top:75.3px;line-height:6.54px;height:6.54px;font-size:5.03px;color:#2e2e2e;font-family:'Liberation Mono',monospace;left:773px;">DIV</span>
<span style="top:75.3px;line-height:6.54px;height:6.54px;font-size:5.03px;color:#2e2e2e;font-family:'Liberation Mono',monospace;left:810px;">85</span>
<span style="top:83.1px;line-height:6.54px;height:6.54px;font-size:5.03px;color:#2e2e2e;font-family:'Liberation Mono',monospace;left:718px;">SP</span>
<span style="top:83.1px;line-height:6.54px;height:6.54px;font-size:5.03px;color:#2e2e2e;font-family:'Liberation Mono',monospace;left:756.8px;">FFFC</span>
<span style="top:83.1px;line-height:6.54px;height:6.54px;font-size:5.03px;color:#2e2e2e;font-family:'Liberation Mono',monospace;left:773px;">IE</span>
<span style="top:83.1px;line-height:6.54px;height:6.54px;font-size:5.03px;color:#2e2e2e;font-family:'Liberation Mono',monospace;left:810px;">02</span>
<span style="top:90.9px;line-height:6.54px;height:6.54px;font-size:5.03px;color:#2e2e2e;font-family:'Liberation Mono',monospace;left:718px;">PC</span>
<span style="top:90.9px;line-height:6.54px;height:6.54px;font-size:5.03px;color:#2e2e2e;font-family:'Liberation Mono',monospace;left:756.8px;">0690</span>
<span style="top:90.9px;line-height:6.54px;height:6.54px;font-size:5.03px;color:#2e2e2e;font-family:'Liberation Mono',monospace;left:773px;">IF</span>
<span style="top:90.9px;line-height:6.54px;height:6.54px;font-size:5.03px;color:#2e2e2e;font-family:'Liberation Mono',monospace;left:810px;">E1</span>
<div style="left:821.2px;top:53.5px;width:5.4px;height:5.4px;background:#fff;border:.5px solid #8a8a8a;border-radius:1px;"></div>
<div style="left:821.2px;top:63.4px;width:5.4px;height:5.4px;background:#1565c8;border-radius:1px;"></div>
<svg style="left:822px;top:64.4px;" width="4" height="3.4" viewBox="0 0 4 3.4"><path d="M.5 1.700 1.600 2.800 3.500.600" fill="none" stroke="#fff" stroke-width=".7"/></svg>
<div style="left:821.2px;top:73.3px;width:5.4px;height:5.4px;background:#fff;border:.5px solid #8a8a8a;border-radius:1px;"></div>
<div style="left:821.2px;top:83.2px;width:5.4px;height:5.4px;background:#1565c8;border-radius:1px;"></div>
<svg style="left:822px;top:84.2px;" width="4" height="3.4" viewBox="0 0 4 3.4"><path d="M.5 1.700 1.600 2.800 3.500.600" fill="none" stroke="#fff" stroke-width=".7"/></svg>
<span style="top:91.3px;line-height:6.54px;height:6.54px;font-size:5.03px;color:#333;font-family:'Liberation Mono',monospace;left:821.8px;">EI</span>
<span style="top:98.39px;line-height:7.02px;height:7.02px;font-size:5.4px;color:#333;left:740.59px;">Cycles (per Frame)</span>
<div style="left:760.3px;top:108.3px;width:64.8px;height:35.4px;background:#ffffff;border:.5px solid #8a8a8a;"></div>
<div style="left:760.6px;top:137.6px;width:64.2px;height:6px;background:#0a14f0;"></div>
<span style="top:145.89px;line-height:6.37px;height:6.37px;font-size:4.9px;color:#333;left:757.77px;">85</span>
<span style="top:145.89px;line-height:6.37px;height:6.37px;font-size:4.9px;color:#333;left:788.71px;">170</span>
<span style="top:145.89px;line-height:6.37px;height:6.37px;font-size:4.9px;color:#333;left:820.41px;">255</span>
<div style="left:717.3px;top:160.5px;width:105px;height:108px;background:#ffffff;border:.5px solid #cfcfcf;"></div>
<div style="left:718px;top:167.3px;width:103.6px;height:7px;background:#86f2f2;"></div>
<span style="top:168.7px;line-height:6.54px;height:6.54px;font-size:5.03px;color:#111;font-family:'Liberation Mono',monospace;left:758.05px;">Bank: FFFC: 0006  ...</span>
<div style="left:825.4px;top:168.5px;width:1.3px;height:10px;background:#a0a0a0;"></div>
<div style="left:717.3px;top:274.8px;width:112px;height:114px;background:#ffffff;border:.5px solid #c4c4c4;"></div>
<span style="top:282.7px;line-height:6.54px;height:6.54px;font-size:5.03px;color:#222;font-family:'Liberation Mono',monospace;left:756.63px;">Bank $1690</span>
<div style="left:445.8px;top:299.3px;width:271px;height:89px;background:#f0f0f0;border:.5px solid #9a9a9a;"></div>
<div style="left:450.4px;top:289.6px;width:24.4px;height:10.2px;background:#ffffff;border:.5px solid #c0c0c0;border-bottom:none;"></div>
<span style="top:291.79px;line-height:6.63px;height:6.63px;font-size:5.1px;color:#333;left:453.39px;">Memory</span>
<div style="left:476px;top:290.6px;width:32px;height:8.9px;background:#f0f0f0;border-right:.5px solid #a0a0a0;"></div>
<span style="top:292.29px;line-height:6.63px;height:6.63px;font-size:5.1px;color:#333;left:478.11px;">Expressions</span>
<div style="left:509.8px;top:290.6px;width:31.2px;height:8.9px;background:#f0f0f0;border-right:.5px solid #a0a0a0;"></div>
<span style="top:292.29px;line-height:6.63px;height:6.63px;font-size:5.1px;color:#333;left:511.93px;">Breakpoints</span>
<div style="left:542.6px;top:290.6px;width:29.7px;height:8.9px;background:#f0f0f0;border-right:.5px solid #a0a0a0;"></div>
<span style="top:292.29px;line-height:6.63px;height:6.63px;font-size:5.1px;color:#333;left:544.98px;">Exceptions</span>
<div style="left:573.8px;top:290.6px;width:22px;height:8.9px;background:#f0f0f0;border-right:.5px solid #a0a0a0;"></div>
<span style="top:292.29px;line-height:6.63px;height:6.63px;font-size:5.1px;color:#333;left:577px;">Events</span>
<div style="left:476.3px;top:300px;width:238px;height:82px;background:#ffffff;"></div>
<div style="left:452.6px;top:302px;width:23.3px;height:8.2px;background:#f6f6f6;border-bottom:.7px solid #6f6f6f;border-right:.5px solid #bdbdbd;"></div>
<span style="top:302.79px;line-height:6.5px;height:6.5px;font-size:5px;color:#333;left:459.02px;">CPU</span>
<div style="left:452.6px;top:310.62px;width:23.3px;height:8.2px;background:#f6f6f6;border-bottom:.7px solid #6f6f6f;border-right:.5px solid #bdbdbd;"></div>
<span style="top:311.41px;line-height:6.5px;height:6.5px;font-size:5px;color:#333;left:458.47px;">ROM</span>
<div style="left:452.6px;top:319.24px;width:23.3px;height:8.2px;background:#f6f6f6;border-bottom:.7px solid #6f6f6f;border-right:.5px solid #bdbdbd;"></div>
<span style="top:320.03px;line-height:6.5px;height:6.5px;font-size:5px;color:#333;left:458.74px;">RAM</span>
<div style="left:452.6px;top:327.86px;width:23.3px;height:8.2px;background:#f6f6f6;border-bottom:.7px solid #6f6f6f;border-right:.5px solid #bdbdbd;"></div>
<span style="top:328.65px;line-height:6.5px;height:6.5px;font-size:5px;color:#333;left:457.08px;">VRAM</span>
<div style="left:452.6px;top:336.48px;width:23.3px;height:8.2px;background:#f6f6f6;border-bottom:.7px solid #6f6f6f;border-right:.5px solid #bdbdbd;"></div>
<span style="top:337.27px;line-height:6.5px;height:6.5px;font-size:5px;color:#333;left:455.27px;">Palettes</span>
<div style="left:452.6px;top:345.1px;width:23.3px;height:8.2px;background:#f6f6f6;border-bottom:.7px solid #6f6f6f;border-right:.5px solid #bdbdbd;"></div>
<span style="top:345.89px;line-height:6.5px;height:6.5px;font-size:5px;color:#333;left:460.97px;">I/O</span>
<div style="left:452.6px;top:353.72px;width:23.3px;height:8.2px;background:#f6f6f6;border-bottom:.7px solid #6f6f6f;border-right:.5px solid #bdbdbd;"></div>
<span style="top:354.51px;line-height:6.5px;height:6.5px;font-size:5px;color:#333;left:456.94px;">HRAM</span>
<div style="left:452.6px;top:362.34px;width:23.3px;height:8.2px;background:#f6f6f6;border-bottom:.7px solid #6f6f6f;border-right:.5px solid #bdbdbd;"></div>
<span style="top:363.13px;line-height:6.5px;height:6.5px;font-size:5px;color:#333;left:458.61px;">OAM</span>
<div class="clip" style="left:476.300px;top:300px;width:238px;height:79.800px;">
<span style="top:2.6px;line-height:6.54px;height:6.54px;font-size:5.03px;color:#2a2a2a;font-family:'Liberation Mono',monospace;left:1.8px;">00:0000</span>
<span style="top:2.6px;line-height:6.54px;height:6.54px;font-size:5.03px;color:#2a5d80;font-family:'Liberation Mono',monospace;left:31.9px;">79</span>
<span style="top:2.6px;line-height:6.54px;height:6.54px;font-size:5.03px;color:#2a5d80;font-family:'Liberation Mono',monospace;left:43.1px;">CB</span>
<span style="top:2.6px;line-height:6.54px;height:6.54px;font-size:5.03px;color:#2a5d80;font-family:'Liberation Mono',monospace;left:54.3px;">08</span>
<span style="top:2.6px;line-height:6.54px;height:6.54px;font-size:5.03px;color:#2a5d80;font-family:'Liberation Mono',monospace;left:65.5px;">1F</span>
<span style="top:2.6px;line-height:6.54px;height:6.54px;font-size:5.03px;color:#2a5d80;font-family:'Liberation Mono',monospace;left:76.7px;">CB</span>
<span style="top:2.6px;line-height:6.54px;height:6.54px;font-size:5.03px;color:#2a5d80;font-family:'Liberation Mono',monospace;left:87.9px;">08</span>
<span style="top:2.6px;line-height:6.54px;height:6.54px;font-size:5.03px;color:#2a5d80;font-family:'Liberation Mono',monospace;left:99.1px;">1F</span>
<span style="top:2.6px;line-height:6.54px;height:6.54px;font-size:5.03px;color:#2a5d80;font-family:'Liberation Mono',monospace;left:110.3px;">CB</span>
<span style="top:2.6px;line-height:6.54px;height:6.54px;font-size:5.03px;color:#2a5d80;font-family:'Liberation Mono',monospace;left:121.66px;">08</span>
<span style="top:2.6px;line-height:6.54px;height:6.54px;font-size:5.03px;color:#2a5d80;font-family:'Liberation Mono',monospace;left:132.88px;">1F</span>
<span style="top:2.6px;line-height:6.54px;height:6.54px;font-size:5.03px;color:#2a5d80;font-family:'Liberation Mono',monospace;left:144.1px;">CB</span>
<span style="top:2.6px;line-height:6.54px;height:6.54px;font-size:5.03px;color:#2a5d80;font-family:'Liberation Mono',monospace;left:155.32px;">09</span>
<span style="top:2.6px;line-height:6.54px;height:6.54px;font-size:5.03px;color:#2a5d80;font-family:'Liberation Mono',monospace;left:166.54px;">1F</span>
<span style="top:2.6px;line-height:6.54px;height:6.54px;font-size:5.03px;color:#2a5d80;font-family:'Liberation Mono',monospace;left:177.76px;">CB</span>
<span style="top:2.6px;line-height:6.54px;height:6.54px;font-size:5.03px;color:#2a5d80;font-family:'Liberation Mono',monospace;left:188.98px;">09</span>
<span style="top:2.6px;line-height:6.54px;height:6.54px;font-size:5.03px;color:#2a5d80;font-family:'Liberation Mono',monospace;left:200.2px;">1F</span>
<span style="top:2.6px;line-height:6.54px;height:6.54px;font-size:5.03px;color:#2a5d80;font-family:'Liberation Mono',monospace;left:214.2px;">y.......</span>
<span style="top:9.48px;line-height:6.54px;height:6.54px;font-size:5.03px;color:#2a2a2a;font-family:'Liberation Mono',monospace;left:1.8px;">00:0010</span>
<span style="top:9.48px;line-height:6.54px;height:6.54px;font-size:5.03px;color:#2a5d80;font-family:'Liberation Mono',monospace;left:31.9px;">0A</span>
<span style="top:9.48px;line-height:6.54px;height:6.54px;font-size:5.03px;color:#2a5d80;font-family:'Liberation Mono',monospace;left:43.1px;">1F</span>
<span style="top:9.48px;line-height:6.54px;height:6.54px;font-size:5.03px;color:#2a5d80;font-family:'Liberation Mono',monospace;left:54.3px;">CB</span>
<span style="top:9.48px;line-height:6.54px;height:6.54px;font-size:5.03px;color:#2a5d80;font-family:'Liberation Mono',monospace;left:65.5px;">0A</span>
<span style="top:9.48px;line-height:6.54px;height:6.54px;font-size:5.03px;color:#2a5d80;font-family:'Liberation Mono',monospace;left:76.7px;">1F</span>
<span style="top:9.48px;line-height:6.54px;height:6.54px;font-size:5.03px;color:#2a5d80;font-family:'Liberation Mono',monospace;left:87.9px;">CB</span>
<span style="top:9.48px;line-height:6.54px;height:6.54px;font-size:5.03px;color:#2a5d80;font-family:'Liberation Mono',monospace;left:99.1px;">0A</span>
<span style="top:9.48px;line-height:6.54px;height:6.54px;font-size:5.03px;color:#2a5d80;font-family:'Liberation Mono',monospace;left:110.3px;">1F</span>
<span style="top:9.48px;line-height:6.54px;height:6.54px;font-size:5.03px;color:#2a5d80;font-family:'Liberation Mono',monospace;left:121.66px;">CB</span>
<span style="top:9.48px;line-height:6.54px;height:6.54px;font-size:5.03px;color:#2a5d80;font-family:'Liberation Mono',monospace;left:132.88px;">0B</span>
<span style="top:9.48px;line-height:6.54px;height:6.54px;font-size:5.03px;color:#2a5d80;font-family:'Liberation Mono',monospace;left:144.1px;">1F</span>
<span style="top:9.48px;line-height:6.54px;height:6.54px;font-size:5.03px;color:#2a5d80;font-family:'Liberation Mono',monospace;left:155.32px;">CB</span>
<span style="top:9.48px;line-height:6.54px;height:6.54px;font-size:5.03px;color:#2a5d80;font-family:'Liberation Mono',monospace;left:166.54px;">0B</span>
<span style="top:9.48px;line-height:6.54px;height:6.54px;font-size:5.03px;color:#2a5d80;font-family:'Liberation Mono',monospace;left:177.76px;">1F</span>
<span style="top:9.48px;line-height:6.54px;height:6.54px;font-size:5.03px;color:#2a5d80;font-family:'Liberation Mono',monospace;left:188.98px;">CB</span>
<span style="top:9.48px;line-height:6.54px;height:6.54px;font-size:5.03px;color:#2a5d80;font-family:'Liberation Mono',monospace;left:200.2px;">0B</span>
<span style="top:9.48px;line-height:6.54px;height:6.54px;font-size:5.03px;color:#2a5d80;font-family:'Liberation Mono',monospace;left:214.2px;">........</span>
<span style="top:16.36px;line-height:6.54px;height:6.54px;font-size:5.03px;color:#2a2a2a;font-family:'Liberation Mono',monospace;left:1.8px;">00:0020</span>
<span style="top:16.36px;line-height:6.54px;height:6.54px;font-size:5.03px;color:#2a5d80;font-family:'Liberation Mono',monospace;left:31.9px;">5F</span>
<span style="top:16.36px;line-height:6.54px;height:6.54px;font-size:5.03px;color:#2a5d80;font-family:'Liberation Mono',monospace;left:43.1px;">2A</span>
<span style="top:16.36px;line-height:6.54px;height:6.54px;font-size:5.03px;color:#2a5d80;font-family:'Liberation Mono',monospace;left:54.3px;">80</span>
<span style="top:16.36px;line-height:6.54px;height:6.54px;font-size:5.03px;color:#2a5d80;font-family:'Liberation Mono',monospace;left:65.5px;">12</span>
<span style="top:16.36px;line-height:6.54px;height:6.54px;font-size:5.03px;color:#2a5d80;font-family:'Liberation Mono',monospace;left:76.7px;">1C</span>
<span style="top:16.36px;line-height:6.54px;height:6.54px;font-size:5.03px;color:#2a5d80;font-family:'Liberation Mono',monospace;left:87.9px;">2A</span>
<span style="top:16.36px;line-height:6.54px;height:6.54px;font-size:5.03px;color:#2a5d80;font-family:'Liberation Mono',monospace;left:99.1px;">81</span>
<span style="top:16.36px;line-height:6.54px;height:6.54px;font-size:5.03px;color:#2a5d80;font-family:'Liberation Mono',monospace;left:110.3px;">12</span>
<span style="top:16.36px;line-height:6.54px;height:6.54px;font-size:5.03px;color:#2a5d80;font-family:'Liberation Mono',monospace;left:121.66px;">1C</span>
<span style="top:16.36px;line-height:6.54px;height:6.54px;font-size:5.03px;color:#2a5d80;font-family:'Liberation Mono',monospace;left:132.88px;">2A</span>
<span style="top:16.36px;line-height:6.54px;height:6.54px;font-size:5.03px;color:#2a5d80;font-family:'Liberation Mono',monospace;left:144.1px;">82</span>
<span style="top:16.36px;line-height:6.54px;height:6.54px;font-size:5.03px;color:#2a5d80;font-family:'Liberation Mono',monospace;left:155.32px;">12</span>
<span style="top:16.36px;line-height:6.54px;height:6.54px;font-size:5.03px;color:#2a5d80;font-family:'Liberation Mono',monospace;left:166.54px;">1C</span>
<span style="top:16.36px;line-height:6.54px;height:6.54px;font-size:5.03px;color:#2a5d80;font-family:'Liberation Mono',monospace;left:177.76px;">2A</span>
<span style="top:16.36px;line-height:6.54px;height:6.54px;font-size:5.03px;color:#2a5d80;font-family:'Liberation Mono',monospace;left:188.98px;">83</span>
<span style="top:16.36px;line-height:6.54px;height:6.54px;font-size:5.03px;color:#2a5d80;font-family:'Liberation Mono',monospace;left:200.2px;">12</span>
<span style="top:16.36px;line-height:6.54px;height:6.54px;font-size:5.03px;color:#2a5d80;font-family:'Liberation Mono',monospace;left:214.2px;">_*...*..</span>
<span style="top:23.24px;line-height:6.54px;height:6.54px;font-size:5.03px;color:#2a2a2a;font-family:'Liberation Mono',monospace;left:1.8px;">00:0030</span>
<span style="top:23.24px;line-height:6.54px;height:6.54px;font-size:5.03px;color:#2a5d80;font-family:'Liberation Mono',monospace;left:31.9px;">FE</span>
<span style="top:23.24px;line-height:6.54px;height:6.54px;font-size:5.03px;color:#2a5d80;font-family:'Liberation Mono',monospace;left:43.1px;">80</span>
<span style="top:23.24px;line-height:6.54px;height:6.54px;font-size:5.03px;color:#2a5d80;font-family:'Liberation Mono',monospace;left:54.3px;">20</span>
<span style="top:23.24px;line-height:6.54px;height:6.54px;font-size:5.03px;color:#2a5d80;font-family:'Liberation Mono',monospace;left:65.5px;">ED</span>
<span style="top:23.24px;line-height:6.54px;height:6.54px;font-size:5.03px;color:#2a5d80;font-family:'Liberation Mono',monospace;left:76.7px;">7B</span>
<span style="top:23.24px;line-height:6.54px;height:6.54px;font-size:5.03px;color:#2a5d80;font-family:'Liberation Mono',monospace;left:87.9px;">E0</span>
<span style="top:23.24px;line-height:6.54px;height:6.54px;font-size:5.03px;color:#2a5d80;font-family:'Liberation Mono',monospace;left:99.1px;">88</span>
<span style="top:23.24px;line-height:6.54px;height:6.54px;font-size:5.03px;color:#2a5d80;font-family:'Liberation Mono',monospace;left:110.3px;">C9</span>
<span style="top:23.24px;line-height:6.54px;height:6.54px;font-size:5.03px;color:#2a5d80;font-family:'Liberation Mono',monospace;left:121.66px;">FF</span>
<span style="top:23.24px;line-height:6.54px;height:6.54px;font-size:5.03px;color:#2a5d80;font-family:'Liberation Mono',monospace;left:132.88px;">FF</span>
<span style="top:23.24px;line-height:6.54px;height:6.54px;font-size:5.03px;color:#2a5d80;font-family:'Liberation Mono',monospace;left:144.1px;">FF</span>
<span style="top:23.24px;line-height:6.54px;height:6.54px;font-size:5.03px;color:#2a5d80;font-family:'Liberation Mono',monospace;left:155.32px;">FF</span>
<span style="top:23.24px;line-height:6.54px;height:6.54px;font-size:5.03px;color:#2a5d80;font-family:'Liberation Mono',monospace;left:166.54px;">FF</span>
<span style="top:23.24px;line-height:6.54px;height:6.54px;font-size:5.03px;color:#2a5d80;font-family:'Liberation Mono',monospace;left:177.76px;">FF</span>
<span style="top:23.24px;line-height:6.54px;height:6.54px;font-size:5.03px;color:#2a5d80;font-family:'Liberation Mono',monospace;left:188.98px;">FF</span>
<span style="top:23.24px;line-height:6.54px;height:6.54px;font-size:5.03px;color:#2a5d80;font-family:'Liberation Mono',monospace;left:200.2px;">FF</span>
<span style="top:23.24px;line-height:6.54px;height:6.54px;font-size:5.03px;color:#2a5d80;font-family:'Liberation Mono',monospace;left:214.2px;">.. .{...</span>
<span style="top:30.12px;line-height:6.54px;height:6.54px;font-size:5.03px;color:#2a2a2a;font-family:'Liberation Mono',monospace;left:1.8px;">00:0040</span>
<span style="top:30.12px;line-height:6.54px;height:6.54px;font-size:5.03px;color:#2a5d80;font-family:'Liberation Mono',monospace;left:31.9px;">00</span>
<span style="top:30.12px;line-height:6.54px;height:6.54px;font-size:5.03px;color:#2a5d80;font-family:'Liberation Mono',monospace;left:43.1px;">00</span>
<span style="top:30.12px;line-height:6.54px;height:6.54px;font-size:5.03px;color:#2a5d80;font-family:'Liberation Mono',monospace;left:54.3px;">00</span>
<span style="top:30.12px;line-height:6.54px;height:6.54px;font-size:5.03px;color:#2a5d80;font-family:'Liberation Mono',monospace;left:65.5px;">00</span>
<span style="top:30.12px;line-height:6.54px;height:6.54px;font-size:5.03px;color:#2a5d80;font-family:'Liberation Mono',monospace;left:76.7px;">00</span>
<span style="top:30.12px;line-height:6.54px;height:6.54px;font-size:5.03px;color:#2a5d80;font-family:'Liberation Mono',monospace;left:87.9px;">00</span>
<span style="top:30.12px;line-height:6.54px;height:6.54px;font-size:5.03px;color:#2a5d80;font-family:'Liberation Mono',monospace;left:99.1px;">00</span>
<span style="top:30.12px;line-height:6.54px;height:6.54px;font-size:5.03px;color:#2a5d80;font-family:'Liberation Mono',monospace;left:110.3px;">00</span>
<span style="top:30.12px;line-height:6.54px;height:6.54px;font-size:5.03px;color:#2a5d80;font-family:'Liberation Mono',monospace;left:121.66px;">C3</span>
<span style="top:30.12px;line-height:6.54px;height:6.54px;font-size:5.03px;color:#2a5d80;font-family:'Liberation Mono',monospace;left:132.88px;">6A</span>
<span style="top:30.12px;line-height:6.54px;height:6.54px;font-size:5.03px;color:#2a5d80;font-family:'Liberation Mono',monospace;left:144.1px;">01</span>
<span style="top:30.12px;line-height:6.54px;height:6.54px;font-size:5.03px;color:#2a5d80;font-family:'Liberation Mono',monospace;left:155.32px;">FF</span>
<span style="top:30.12px;line-height:6.54px;height:6.54px;font-size:5.03px;color:#2a5d80;font-family:'Liberation Mono',monospace;left:166.54px;">FF</span>
<span style="top:30.12px;line-height:6.54px;height:6.54px;font-size:5.03px;color:#2a5d80;font-family:'Liberation Mono',monospace;left:177.76px;">FF</span>
<span style="top:30.12px;line-height:6.54px;height:6.54px;font-size:5.03px;color:#2a5d80;font-family:'Liberation Mono',monospace;left:188.98px;">FF</span>
<span style="top:30.12px;line-height:6.54px;height:6.54px;font-size:5.03px;color:#2a5d80;font-family:'Liberation Mono',monospace;left:200.2px;">FF</span>
<span style="top:30.12px;line-height:6.54px;height:6.54px;font-size:5.03px;color:#2a5d80;font-family:'Liberation Mono',monospace;left:214.2px;">........</span>
<span style="top:37px;line-height:6.54px;height:6.54px;font-size:5.03px;color:#2a2a2a;font-family:'Liberation Mono',monospace;left:1.8px;">00:0050</span>
<span style="top:37px;line-height:6.54px;height:6.54px;font-size:5.03px;color:#2a5d80;font-family:'Liberation Mono',monospace;left:31.9px;">E0</span>
<span style="top:37px;line-height:6.54px;height:6.54px;font-size:5.03px;color:#2a5d80;font-family:'Liberation Mono',monospace;left:43.1px;">45</span>
<span style="top:37px;line-height:6.54px;height:6.54px;font-size:5.03px;color:#2a5d80;font-family:'Liberation Mono',monospace;left:54.3px;">3E</span>
<span style="top:37px;line-height:6.54px;height:6.54px;font-size:5.03px;color:#2a5d80;font-family:'Liberation Mono',monospace;left:65.5px;">C7</span>
<span style="top:37px;line-height:6.54px;height:6.54px;font-size:5.03px;color:#2a5d80;font-family:'Liberation Mono',monospace;left:76.7px;">EA</span>
<span style="top:37px;line-height:6.54px;height:6.54px;font-size:5.03px;color:#2a5d80;font-family:'Liberation Mono',monospace;left:87.9px;">40</span>
<span style="top:37px;line-height:6.54px;height:6.54px;font-size:5.03px;color:#2a5d80;font-family:'Liberation Mono',monospace;left:99.1px;">FF</span>
<span style="top:37px;line-height:6.54px;height:6.54px;font-size:5.03px;color:#2a5d80;font-family:'Liberation Mono',monospace;left:110.3px;">C3</span>
<span style="top:37px;line-height:6.54px;height:6.54px;font-size:5.03px;color:#2a5d80;font-family:'Liberation Mono',monospace;left:121.66px;">9B</span>
<span style="top:37px;line-height:6.54px;height:6.54px;font-size:5.03px;color:#2a5d80;font-family:'Liberation Mono',monospace;left:132.88px;">01</span>
<span style="top:37px;line-height:6.54px;height:6.54px;font-size:5.03px;color:#2a5d80;font-family:'Liberation Mono',monospace;left:144.1px;">FF</span>
<span style="top:37px;line-height:6.54px;height:6.54px;font-size:5.03px;color:#2a5d80;font-family:'Liberation Mono',monospace;left:155.32px;">FF</span>
<span style="top:37px;line-height:6.54px;height:6.54px;font-size:5.03px;color:#2a5d80;font-family:'Liberation Mono',monospace;left:166.54px;">FF</span>
<span style="top:37px;line-height:6.54px;height:6.54px;font-size:5.03px;color:#2a5d80;font-family:'Liberation Mono',monospace;left:177.76px;">FF</span>
<span style="top:37px;line-height:6.54px;height:6.54px;font-size:5.03px;color:#2a5d80;font-family:'Liberation Mono',monospace;left:188.98px;">FF</span>
<span style="top:37px;line-height:6.54px;height:6.54px;font-size:5.03px;color:#2a5d80;font-family:'Liberation Mono',monospace;left:200.2px;">FF</span>
<span style="top:37px;line-height:6.54px;height:6.54px;font-size:5.03px;color:#2a5d80;font-family:'Liberation Mono',monospace;left:214.2px;">.E&gt;..@..</span>
<span style="top:43.88px;line-height:6.54px;height:6.54px;font-size:5.03px;color:#2a2a2a;font-family:'Liberation Mono',monospace;left:1.8px;">00:0060</span>
<span style="top:43.88px;line-height:6.54px;height:6.54px;font-size:5.03px;color:#2a5d80;font-family:'Liberation Mono',monospace;left:31.9px;">EA</span>
<span style="top:43.88px;line-height:6.54px;height:6.54px;font-size:5.03px;color:#2a5d80;font-family:'Liberation Mono',monospace;left:43.1px;">40</span>
<span style="top:43.88px;line-height:6.54px;height:6.54px;font-size:5.03px;color:#2a5d80;font-family:'Liberation Mono',monospace;left:54.3px;">FF</span>
<span style="top:43.88px;line-height:6.54px;height:6.54px;font-size:5.03px;color:#2a5d80;font-family:'Liberation Mono',monospace;left:65.5px;">F1</span>
<span style="top:43.88px;line-height:6.54px;height:6.54px;font-size:5.03px;color:#2a5d80;font-family:'Liberation Mono',monospace;left:76.7px;">D9</span>
<span style="top:43.88px;line-height:6.54px;height:6.54px;font-size:5.03px;color:#2a5d80;font-family:'Liberation Mono',monospace;left:87.9px;">28</span>
<span style="top:43.88px;line-height:6.54px;height:6.54px;font-size:5.03px;color:#2a5d80;font-family:'Liberation Mono',monospace;left:99.1px;">1C</span>
<span style="top:43.88px;line-height:6.54px;height:6.54px;font-size:5.03px;color:#2a5d80;font-family:'Liberation Mono',monospace;left:110.3px;">0A</span>
<span style="top:43.88px;line-height:6.54px;height:6.54px;font-size:5.03px;color:#2a5d80;font-family:'Liberation Mono',monospace;left:121.66px;">0B</span>
<span style="top:43.88px;line-height:6.54px;height:6.54px;font-size:5.03px;color:#2a5d80;font-family:'Liberation Mono',monospace;left:132.88px;">0C</span>
<span style="top:43.88px;line-height:6.54px;height:6.54px;font-size:5.03px;color:#2a5d80;font-family:'Liberation Mono',monospace;left:144.1px;">0D</span>
<span style="top:43.88px;line-height:6.54px;height:6.54px;font-size:5.03px;color:#2a5d80;font-family:'Liberation Mono',monospace;left:155.32px;">0E</span>
<span style="top:43.88px;line-height:6.54px;height:6.54px;font-size:5.03px;color:#2a5d80;font-family:'Liberation Mono',monospace;left:166.54px;">0F</span>
<span style="top:43.88px;line-height:6.54px;height:6.54px;font-size:5.03px;color:#2a5d80;font-family:'Liberation Mono',monospace;left:177.76px;">10</span>
<span style="top:43.88px;line-height:6.54px;height:6.54px;font-size:5.03px;color:#2a5d80;font-family:'Liberation Mono',monospace;left:188.98px;">11</span>
<span style="top:43.88px;line-height:6.54px;height:6.54px;font-size:5.03px;color:#2a5d80;font-family:'Liberation Mono',monospace;left:200.2px;">12</span>
<span style="top:43.88px;line-height:6.54px;height:6.54px;font-size:5.03px;color:#2a5d80;font-family:'Liberation Mono',monospace;left:214.2px;">.@...(..</span>
<span style="top:50.76px;line-height:6.54px;height:6.54px;font-size:5.03px;color:#2a2a2a;font-family:'Liberation Mono',monospace;left:1.8px;">00:0070</span>
<span style="top:50.76px;line-height:6.54px;height:6.54px;font-size:5.03px;color:#2a5d80;font-family:'Liberation Mono',monospace;left:31.9px;">FF</span>
<span style="top:50.76px;line-height:6.54px;height:6.54px;font-size:5.03px;color:#2a5d80;font-family:'Liberation Mono',monospace;left:43.1px;">3E</span>
<span style="top:50.76px;line-height:6.54px;height:6.54px;font-size:5.03px;color:#2a5d80;font-family:'Liberation Mono',monospace;left:54.3px;">03</span>
<span style="top:50.76px;line-height:6.54px;height:6.54px;font-size:5.03px;color:#2a5d80;font-family:'Liberation Mono',monospace;left:65.5px;">EA</span>
<span style="top:50.76px;line-height:6.54px;height:6.54px;font-size:5.03px;color:#2a5d80;font-family:'Liberation Mono',monospace;left:76.7px;">A6</span>
<span style="top:50.76px;line-height:6.54px;height:6.54px;font-size:5.03px;color:#2a5d80;font-family:'Liberation Mono',monospace;left:87.9px;">C0</span>
<span style="top:50.76px;line-height:6.54px;height:6.54px;font-size:5.03px;color:#2a5d80;font-family:'Liberation Mono',monospace;left:99.1px;">AF</span>
<span style="top:50.76px;line-height:6.54px;height:6.54px;font-size:5.03px;color:#2a5d80;font-family:'Liberation Mono',monospace;left:110.3px;">EA</span>
<span style="top:50.76px;line-height:6.54px;height:6.54px;font-size:5.03px;color:#2a5d80;font-family:'Liberation Mono',monospace;left:121.66px;">A7</span>
<span style="top:50.76px;line-height:6.54px;height:6.54px;font-size:5.03px;color:#2a5d80;font-family:'Liberation Mono',monospace;left:132.88px;">C0</span>
<span style="top:50.76px;line-height:6.54px;height:6.54px;font-size:5.03px;color:#2a5d80;font-family:'Liberation Mono',monospace;left:144.1px;">3E</span>
<span style="top:50.76px;line-height:6.54px;height:6.54px;font-size:5.03px;color:#2a5d80;font-family:'Liberation Mono',monospace;left:155.32px;">01</span>
<span style="top:50.76px;line-height:6.54px;height:6.54px;font-size:5.03px;color:#2a5d80;font-family:'Liberation Mono',monospace;left:166.54px;">EA</span>
<span style="top:50.76px;line-height:6.54px;height:6.54px;font-size:5.03px;color:#2a5d80;font-family:'Liberation Mono',monospace;left:177.76px;">A8</span>
<span style="top:50.76px;line-height:6.54px;height:6.54px;font-size:5.03px;color:#2a5d80;font-family:'Liberation Mono',monospace;left:188.98px;">C0</span>
<span style="top:50.76px;line-height:6.54px;height:6.54px;font-size:5.03px;color:#2a5d80;font-family:'Liberation Mono',monospace;left:200.2px;">C9</span>
<span style="top:50.76px;line-height:6.54px;height:6.54px;font-size:5.03px;color:#2a5d80;font-family:'Liberation Mono',monospace;left:214.2px;">.&gt;......</span>
<span style="top:57.64px;line-height:6.54px;height:6.54px;font-size:5.03px;color:#2a2a2a;font-family:'Liberation Mono',monospace;left:1.8px;">00:0080</span>
<span style="top:57.64px;line-height:6.54px;height:6.54px;font-size:5.03px;color:#2a5d80;font-family:'Liberation Mono',monospace;left:31.9px;">EA</span>
<span style="top:57.64px;line-height:6.54px;height:6.54px;font-size:5.03px;color:#2a5d80;font-family:'Liberation Mono',monospace;left:43.1px;">A3</span>
<span style="top:57.64px;line-height:6.54px;height:6.54px;font-size:5.03px;color:#2a5d80;font-family:'Liberation Mono',monospace;left:54.3px;">C0</span>
<span style="top:57.64px;line-height:6.54px;height:6.54px;font-size:5.03px;color:#2a5d80;font-family:'Liberation Mono',monospace;left:65.5px;">EA</span>
<span style="top:57.64px;line-height:6.54px;height:6.54px;font-size:5.03px;color:#2a5d80;font-family:'Liberation Mono',monospace;left:76.7px;">A4</span>
<span style="top:57.64px;line-height:6.54px;height:6.54px;font-size:5.03px;color:#2a5d80;font-family:'Liberation Mono',monospace;left:87.9px;">C0</span>
<span style="top:57.64px;line-height:6.54px;height:6.54px;font-size:5.03px;color:#2a5d80;font-family:'Liberation Mono',monospace;left:99.1px;">EA</span>
<span style="top:57.64px;line-height:6.54px;height:6.54px;font-size:5.03px;color:#2a5d80;font-family:'Liberation Mono',monospace;left:110.3px;">A5</span>
<span style="top:57.64px;line-height:6.54px;height:6.54px;font-size:5.03px;color:#2a5d80;font-family:'Liberation Mono',monospace;left:121.66px;">C0</span>
<span style="top:57.64px;line-height:6.54px;height:6.54px;font-size:5.03px;color:#2a5d80;font-family:'Liberation Mono',monospace;left:132.88px;">CD</span>
<span style="top:57.64px;line-height:6.54px;height:6.54px;font-size:5.03px;color:#2a5d80;font-family:'Liberation Mono',monospace;left:144.1px;">9C</span>
<span style="top:57.64px;line-height:6.54px;height:6.54px;font-size:5.03px;color:#2a5d80;font-family:'Liberation Mono',monospace;left:155.32px;">21</span>
<span style="top:57.64px;line-height:6.54px;height:6.54px;font-size:5.03px;color:#2a5d80;font-family:'Liberation Mono',monospace;left:166.54px;">65</span>
<span style="top:57.64px;line-height:6.54px;height:6.54px;font-size:5.03px;color:#2a5d80;font-family:'Liberation Mono',monospace;left:177.76px;">00</span>
<span style="top:57.64px;line-height:6.54px;height:6.54px;font-size:5.03px;color:#2a5d80;font-family:'Liberation Mono',monospace;left:188.98px;">CD</span>
<span style="top:57.64px;line-height:6.54px;height:6.54px;font-size:5.03px;color:#2a5d80;font-family:'Liberation Mono',monospace;left:200.2px;">02</span>
<span style="top:57.64px;line-height:6.54px;height:6.54px;font-size:5.03px;color:#2a5d80;font-family:'Liberation Mono',monospace;left:214.2px;">........</span>
<span style="top:64.52px;line-height:6.54px;height:6.54px;font-size:5.03px;color:#2a2a2a;font-family:'Liberation Mono',monospace;left:1.8px;">00:0090</span>
<span style="top:64.52px;line-height:6.54px;height:6.54px;font-size:5.03px;color:#2a5d80;font-family:'Liberation Mono',monospace;left:31.9px;">00</span>
<span style="top:64.52px;line-height:6.54px;height:6.54px;font-size:5.03px;color:#2a5d80;font-family:'Liberation Mono',monospace;left:43.1px;">9C</span>
<span style="top:64.52px;line-height:6.54px;height:6.54px;font-size:5.03px;color:#2a5d80;font-family:'Liberation Mono',monospace;left:54.3px;">21</span>
<span style="top:64.52px;line-height:6.54px;height:6.54px;font-size:5.03px;color:#2a5d80;font-family:'Liberation Mono',monospace;left:65.5px;">65</span>
<span style="top:64.52px;line-height:6.54px;height:6.54px;font-size:5.03px;color:#2a5d80;font-family:'Liberation Mono',monospace;left:76.7px;">00</span>
<span style="top:64.52px;line-height:6.54px;height:6.54px;font-size:5.03px;color:#2a5d80;font-family:'Liberation Mono',monospace;left:87.9px;">CD</span>
<span style="top:64.52px;line-height:6.54px;height:6.54px;font-size:5.03px;color:#2a5d80;font-family:'Liberation Mono',monospace;left:99.1px;">02</span>
<span style="top:64.52px;line-height:6.54px;height:6.54px;font-size:5.03px;color:#2a5d80;font-family:'Liberation Mono',monospace;left:110.3px;">14</span>
<span style="top:64.52px;line-height:6.54px;height:6.54px;font-size:5.03px;color:#2a5d80;font-family:'Liberation Mono',monospace;left:121.66px;">CD</span>
<span style="top:64.52px;line-height:6.54px;height:6.54px;font-size:5.03px;color:#2a5d80;font-family:'Liberation Mono',monospace;left:132.88px;">1C</span>
<span style="top:64.52px;line-height:6.54px;height:6.54px;font-size:5.03px;color:#2a5d80;font-family:'Liberation Mono',monospace;left:144.1px;">16</span>
<span style="top:64.52px;line-height:6.54px;height:6.54px;font-size:5.03px;color:#2a5d80;font-family:'Liberation Mono',monospace;left:155.32px;">CD</span>
<span style="top:64.52px;line-height:6.54px;height:6.54px;font-size:5.03px;color:#2a5d80;font-family:'Liberation Mono',monospace;left:166.54px;">2E</span>
<span style="top:64.52px;line-height:6.54px;height:6.54px;font-size:5.03px;color:#2a5d80;font-family:'Liberation Mono',monospace;left:177.76px;">16</span>
<span style="top:64.52px;line-height:6.54px;height:6.54px;font-size:5.03px;color:#2a5d80;font-family:'Liberation Mono',monospace;left:188.98px;">AF</span>
<span style="top:64.52px;line-height:6.54px;height:6.54px;font-size:5.03px;color:#2a5d80;font-family:'Liberation Mono',monospace;left:200.2px;">EA</span>
<span style="top:64.52px;line-height:6.54px;height:6.54px;font-size:5.03px;color:#2a5d80;font-family:'Liberation Mono',monospace;left:214.2px;">..!e....</span>
<span style="top:71.4px;line-height:6.54px;height:6.54px;font-size:5.03px;color:#2a2a2a;font-family:'Liberation Mono',monospace;left:1.8px;">00:00A0</span>
<span style="top:71.4px;line-height:6.54px;height:6.54px;font-size:5.03px;color:#2a5d80;font-family:'Liberation Mono',monospace;left:31.9px;">14</span>
<span style="top:71.4px;line-height:6.54px;height:6.54px;font-size:5.03px;color:#2a5d80;font-family:'Liberation Mono',monospace;left:43.1px;">CD</span>
<span style="top:71.4px;line-height:6.54px;height:6.54px;font-size:5.03px;color:#2a5d80;font-family:'Liberation Mono',monospace;left:54.3px;">1C</span>
<span style="top:71.4px;line-height:6.54px;height:6.54px;font-size:5.03px;color:#2a5d80;font-family:'Liberation Mono',monospace;left:65.5px;">16</span>
<span style="top:71.4px;line-height:6.54px;height:6.54px;font-size:5.03px;color:#2a5d80;font-family:'Liberation Mono',monospace;left:76.7px;">CD</span>
<span style="top:71.4px;line-height:6.54px;height:6.54px;font-size:5.03px;color:#2a5d80;font-family:'Liberation Mono',monospace;left:87.9px;">2E</span>
<span style="top:71.4px;line-height:6.54px;height:6.54px;font-size:5.03px;color:#2a5d80;font-family:'Liberation Mono',monospace;left:99.1px;">16</span>
<span style="top:71.4px;line-height:6.54px;height:6.54px;font-size:5.03px;color:#2a5d80;font-family:'Liberation Mono',monospace;left:110.3px;">AF</span>
<span style="top:71.4px;line-height:6.54px;height:6.54px;font-size:5.03px;color:#2a5d80;font-family:'Liberation Mono',monospace;left:121.66px;">EA</span>
<span style="top:71.4px;line-height:6.54px;height:6.54px;font-size:5.03px;color:#2a5d80;font-family:'Liberation Mono',monospace;left:132.88px;">4A</span>
<span style="top:71.4px;line-height:6.54px;height:6.54px;font-size:5.03px;color:#2a5d80;font-family:'Liberation Mono',monospace;left:144.1px;">FF</span>
<span style="top:71.4px;line-height:6.54px;height:6.54px;font-size:5.03px;color:#2a5d80;font-family:'Liberation Mono',monospace;left:155.32px;">3E</span>
<span style="top:71.4px;line-height:6.54px;height:6.54px;font-size:5.03px;color:#2a5d80;font-family:'Liberation Mono',monospace;left:166.54px;">07</span>
<span style="top:71.4px;line-height:6.54px;height:6.54px;font-size:5.03px;color:#2a5d80;font-family:'Liberation Mono',monospace;left:177.76px;">EA</span>
<span style="top:71.4px;line-height:6.54px;height:6.54px;font-size:5.03px;color:#2a5d80;font-family:'Liberation Mono',monospace;left:188.98px;">4B</span>
<span style="top:71.4px;line-height:6.54px;height:6.54px;font-size:5.03px;color:#2a5d80;font-family:'Liberation Mono',monospace;left:200.2px;">FF</span>
<span style="top:71.4px;line-height:6.54px;height:6.54px;font-size:5.03px;color:#2a5d80;font-family:'Liberation Mono',monospace;left:214.2px;">.f..f</span>
<span style="top:78.28px;line-height:6.54px;height:6.54px;font-size:5.03px;color:#2a2a2a;font-family:'Liberation Mono',monospace;left:1.8px;">00:00B0</span>
<span style="top:78.28px;line-height:6.54px;height:6.54px;font-size:5.03px;color:#2a5d80;font-family:'Liberation Mono',monospace;left:31.9px;">3E</span>
<span style="top:78.28px;line-height:6.54px;height:6.54px;font-size:5.03px;color:#2a5d80;font-family:'Liberation Mono',monospace;left:43.1px;">E7</span>
<span style="top:78.28px;line-height:6.54px;height:6.54px;font-size:5.03px;color:#2a5d80;font-family:'Liberation Mono',monospace;left:54.3px;">EA</span>
<span style="top:78.28px;line-height:6.54px;height:6.54px;font-size:5.03px;color:#2a5d80;font-family:'Liberation Mono',monospace;left:65.5px;">40</span>
<span style="top:78.28px;line-height:6.54px;height:6.54px;font-size:5.03px;color:#2a5d80;font-family:'Liberation Mono',monospace;left:76.7px;">FF</span>
<span style="top:78.28px;line-height:6.54px;height:6.54px;font-size:5.03px;color:#2a5d80;font-family:'Liberation Mono',monospace;left:87.9px;">CD</span>
<span style="top:78.28px;line-height:6.54px;height:6.54px;font-size:5.03px;color:#2a5d80;font-family:'Liberation Mono',monospace;left:99.1px;">E4</span>
<span style="top:78.28px;line-height:6.54px;height:6.54px;font-size:5.03px;color:#2a5d80;font-family:'Liberation Mono',monospace;left:110.3px;">EA</span>
<span style="top:78.28px;line-height:6.54px;height:6.54px;font-size:5.03px;color:#2a5d80;font-family:'Liberation Mono',monospace;left:121.66px;">3A</span>
<span style="top:78.28px;line-height:6.54px;height:6.54px;font-size:5.03px;color:#2a5d80;font-family:'Liberation Mono',monospace;left:132.88px;">4C</span>
<span style="top:78.28px;line-height:6.54px;height:6.54px;font-size:5.03px;color:#2a5d80;font-family:'Liberation Mono',monospace;left:144.1px;">C0</span>
<span style="top:78.28px;line-height:6.54px;height:6.54px;font-size:5.03px;color:#2a5d80;font-family:'Liberation Mono',monospace;left:155.32px;">3E</span>
<span style="top:78.28px;line-height:6.54px;height:6.54px;font-size:5.03px;color:#2a5d80;font-family:'Liberation Mono',monospace;left:166.54px;">47</span>
<span style="top:78.28px;line-height:6.54px;height:6.54px;font-size:5.03px;color:#2a5d80;font-family:'Liberation Mono',monospace;left:177.76px;">E0</span>
<span style="top:78.28px;line-height:6.54px;height:6.54px;font-size:5.03px;color:#2a5d80;font-family:'Liberation Mono',monospace;left:188.98px;">49</span>
<span style="top:78.28px;line-height:6.54px;height:6.54px;font-size:5.03px;color:#2a5d80;font-family:'Liberation Mono',monospace;left:200.2px;">FB</span>
<span style="top:78.28px;line-height:6.54px;height:6.54px;font-size:5.03px;color:#2a5d80;font-family:'Liberation Mono',monospace;left:214.2px;">&gt;..@.</span>
</div>
<div style="left:507.9px;top:301.4px;width:3.2px;height:6.4px;background:#111;"></div>
<span style="top:302.6px;line-height:6.54px;height:6.54px;font-size:5.03px;color:#fff;font-family:'Liberation Mono',monospace;left:508.2px;">7</span>
<div style="left:508.2px;top:308px;width:6px;height:0.4px;background:#2a5d80;"></div>
<div style="left:476.3px;top:381.3px;width:238px;height:5.2px;background:#f1f1f1;"></div>
<div style="left:485.6px;top:382.8px;width:186px;height:1.4px;background:#8c8c8c;border-radius:.7px;"></div>
<div style="left:714.3px;top:300px;width:1.8px;height:86px;background:#c9c9c9;"></div>
<div style="left:333px;top:389.3px;width:500px;height:7.9px;background:#ffffff;border-top:.5px solid #a8a8a8;"></div>
<span style="top:390.39px;line-height:7.02px;height:7.02px;font-size:5.4px;color:#222;letter-spacing:0.06px;left:334.5px;">0 bytes selected. Cycles: 0 / 0</span>
<div style="left:409.3px;top:390px;width:0.5px;height:6.8px;background:#9a9a9a;"></div>
<span style="top:391.44px;line-height:6.54px;height:6.54px;font-size:5.03px;color:#222;font-family:'Liberation Mono',monospace;font-weight:700;left:412.4px;">Address: 00:0000 (RenderMetasprite)</span>
<span style="top:391.44px;line-height:6.54px;height:6.54px;font-size:5.03px;color:#222;font-family:'Liberation Mono',monospace;font-weight:700;left:527.8px;">Value: $79</span>
<span style="top:391.44px;line-height:6.54px;height:6.54px;font-size:5.03px;color:#222;font-family:'Liberation Mono',monospace;font-weight:700;left:562px;">|</span>
<span style="top:391.44px;line-height:6.54px;height:6.54px;font-size:5.03px;color:#222;font-family:'Liberation Mono',monospace;font-weight:700;left:567.3px;">%01111001</span>
<span style="top:391.44px;line-height:6.54px;height:6.54px;font-size:5.03px;color:#222;font-family:'Liberation Mono',monospace;font-weight:700;left:598.4px;">|</span>
<span style="top:391.44px;line-height:6.54px;height:6.54px;font-size:5.03px;color:#222;font-family:'Liberation Mono',monospace;font-weight:700;left:604.2px;">121</span>
<span style="top:391.44px;line-height:6.54px;height:6.54px;font-size:5.03px;color:#222;font-family:'Liberation Mono',monospace;font-weight:700;left:621px;">Data type:</span>
<span style="top:391.4px;line-height:6.54px;height:6.54px;font-size:5.03px;color:#2a5d9a;font-family:'Liberation Mono',monospace;left:654.6px;">Code</span>
<div style="left:43.2px;top:37.6px;width:275.8px;height:271.4px;background:#ffffff;border-radius:3px 3px 3px 3px;box-shadow:0 2px 7px rgba(0,0,0,.55),0 0 0 .5px rgba(90,90,90,.7);"></div>
<div style="left:43.2px;top:37.6px;width:275.8px;height:13.6px;background:#f1f1f1;border-radius:3px 3px 0 0;"></div>
<div style="left:46.8px;top:41.6px;width:6.6px;height:5.8px;background:#0d6e68;border-radius:.6px;"></div>
<div style="left:50.3px;top:42.4px;width:2.3px;height:1.3px;background:#c9e86a;"></div>
<div style="left:48px;top:44.8px;width:3px;height:0.9px;background:#58b89a;"></div>
<span style="top:41.19px;line-height:6.89px;height:6.89px;font-size:5.3px;color:#747474;letter-spacing:-0.11px;left:55.6px;">Emulicious - 96% (58 fps)</span>
<div style="left:267.8px;top:44.3px;width:4.6px;height:0.55px;background:#a0a0a0;"></div>
<div style="left:286.8px;top:42px;width:4.6px;height:4.6px;border:.5px solid #a0a0a0;border-radius:.5px;"></div>
<svg style="left:306.5px;top:42px;" width="4.8" height="4.8" viewBox="0 0 4.8 4.8"><path d="M.3.3 4.500 4.500M4.500.3.3 4.500" stroke="#9a9a9a" stroke-width=".55"/></svg>
<span style="top:52.79px;line-height:7.02px;height:7.02px;font-size:5.4px;color:#6a6a6a;letter-spacing:-0.18px;left:45.3px;">File</span>
<span style="top:52.79px;line-height:7.02px;height:7.02px;font-size:5.4px;color:#6a6a6a;letter-spacing:0.34px;left:57.3px;">Options</span>
<span style="top:52.79px;line-height:7.02px;height:7.02px;font-size:5.4px;color:#6a6a6a;letter-spacing:0.14px;left:82px;">Tools</span>
<span style="top:52.79px;line-height:7.02px;height:7.02px;font-size:5.4px;color:#6a6a6a;letter-spacing:0.1px;left:99.8px;">Help</span>
<div class="clip" style="left:43.4px;top:60.3px;width:275.6px;height:248.6px;background:#000;border-radius:0 0 2.500px 2.500px;">
<svg style="left:0;top:0" width="275.6" height="248.6" viewBox="0 0 275.6 248.6"><path d="M105.50 27.36L141.43 27.36" stroke="#5e5e5e" stroke-width="1.06"/><path d="M123.47 14.01L123.47 40.70" stroke="#5e5e5e" stroke-width="1.06"/><path d="M115.59 27.36L131.34 27.36" stroke="#9a9a9a" stroke-width="1.38"/><path d="M123.47 20.85L123.47 33.86" stroke="#9a9a9a" stroke-width="1.38"/><circle cx="123.47" cy="27.36" r="4.96" fill="#8a8a8a" opacity="0.5"/><circle cx="123.47" cy="27.36" r="3.42" fill="#e0e0e0" opacity="0.8"/><circle cx="123.47" cy="27.36" r="2.48" fill="#ffffff" opacity="1"/><path d="M105.50 178.76L141.43 178.76" stroke="#5e5e5e" stroke-width="1.06"/><path d="M123.47 165.41L123.47 192.11" stroke="#5e5e5e" stroke-width="1.06"/><path d="M115.59 178.76L131.34 178.76" stroke="#9a9a9a" stroke-width="1.38"/><path d="M123.47 172.26L123.47 185.26" stroke="#9a9a9a" stroke-width="1.38"/><circle cx="123.47" cy="178.76" r="4.96" fill="#8a8a8a" opacity="0.5"/><circle cx="123.47" cy="178.76" r="3.42" fill="#e0e0e0" opacity="0.8"/><circle cx="123.47" cy="178.76" r="2.48" fill="#ffffff" opacity="1"/><path d="M105.50 90.84L120.56 90.84" stroke="#5a5a5a" stroke-width="1.06"/><path d="M112.69 81.26L112.69 100.43" stroke="#5a5a5a" stroke-width="1.06"/><path d="M109.26 90.84L116.11 90.84" stroke="#9a9a9a" stroke-width="1.27"/><path d="M112.69 86.74L112.69 94.95" stroke="#9a9a9a" stroke-width="1.27"/><circle cx="112.69" cy="90.84" r="3.25" fill="#808080" opacity="0.5"/><circle cx="112.69" cy="90.84" r="1.97" fill="#f4f4f4" opacity="1"/><path d="M105.50 242.25L120.56 242.25" stroke="#5a5a5a" stroke-width="1.06"/><path d="M112.69 232.66L112.69 251.83" stroke="#5a5a5a" stroke-width="1.06"/><path d="M109.26 242.25L116.11 242.25" stroke="#9a9a9a" stroke-width="1.27"/><path d="M112.69 238.14L112.69 246.35" stroke="#9a9a9a" stroke-width="1.27"/><circle cx="112.69" cy="242.25" r="3.25" fill="#808080" opacity="0.5"/><circle cx="112.69" cy="242.25" r="1.97" fill="#f4f4f4" opacity="1"/><path d="M56.39 79.32L62.21 79.32" stroke="#747474" stroke-width="1.06"/><path d="M59.30 76.41L59.30 82.22" stroke="#747474" stroke-width="1.06"/><path d="M56.39 230.72L62.21 230.72" stroke="#747474" stroke-width="1.06"/><path d="M59.30 227.81L59.30 233.63" stroke="#747474" stroke-width="1.06"/><path d="M35.68 -9.81L41.84 -9.81" stroke="#6e6e6e" stroke-width="1.06"/><path d="M38.76 -12.89L38.76 -6.73" stroke="#6e6e6e" stroke-width="1.06"/><circle cx="38.76" cy="-9.81" r="1.28" fill="#d8d8d8" opacity="1"/><path d="M35.68 141.60L41.84 141.60" stroke="#6e6e6e" stroke-width="1.06"/><path d="M38.76 138.52L38.76 144.68" stroke="#6e6e6e" stroke-width="1.06"/><circle cx="38.76" cy="141.60" r="1.28" fill="#d8d8d8" opacity="1"/><rect x="82.40" y="21.17" width="1.71" height="1.71" fill="#8c8c8c"/><rect x="82.40" y="172.57" width="1.71" height="1.71" fill="#8c8c8c"/><rect x="77.95" y="49.38" width="1.71" height="1.71" fill="#8c8c8c"/><rect x="77.95" y="200.79" width="1.71" height="1.71" fill="#8c8c8c"/><rect x="234.69" y="38.37" width="1.71" height="1.71" fill="#8c8c8c"/><rect x="234.69" y="189.78" width="1.71" height="1.71" fill="#8c8c8c"/><rect x="263.78" y="45.09" width="1.71" height="4.11" fill="#8c8c8c"/><rect x="263.78" y="196.49" width="1.71" height="4.11" fill="#8c8c8c"/><rect x="20.97" y="87.23" width="1.71" height="1.71" fill="#8c8c8c"/><rect x="20.97" y="238.64" width="1.71" height="1.71" fill="#8c8c8c"/><rect x="44.58" y="83.45" width="1.71" height="1.71" fill="#8c8c8c"/><rect x="44.58" y="234.85" width="1.71" height="1.71" fill="#8c8c8c"/><rect x="162.14" y="101.00" width="3.08" height="3.08" fill="#7a7a7a"/><rect x="162.14" y="252.41" width="3.08" height="3.08" fill="#7a7a7a"/><rect x="111.83" y="-20.64" width="1.71" height="1.71" fill="#8c8c8c"/><rect x="111.83" y="130.76" width="1.71" height="1.71" fill="#8c8c8c"/><rect x="41.33" y="5.17" width="1.71" height="1.71" fill="#8c8c8c"/><rect x="41.33" y="156.57" width="1.71" height="1.71" fill="#8c8c8c"/><rect x="1.97" y="8.61" width="3.08" height="3.08" fill="#7a7a7a"/><rect x="1.97" y="160.01" width="3.08" height="3.08" fill="#7a7a7a"/><rect x="225.80" y="66.42" width="1.71" height="1.71" fill="#8c8c8c"/><rect x="225.80" y="217.82" width="1.71" height="1.71" fill="#8c8c8c"/><rect x="227.85" y="71.41" width="1.71" height="1.71" fill="#8c8c8c"/><rect x="227.85" y="222.81" width="1.71" height="1.71" fill="#8c8c8c"/><rect x="211.76" y="-10.83" width="1.71" height="4.11" fill="#8c8c8c"/><rect x="211.76" y="140.58" width="1.71" height="4.11" fill="#8c8c8c"/><rect x="196.53" y="-1.54" width="3.08" height="3.08" fill="#7a7a7a"/><rect x="196.53" y="149.86" width="3.08" height="3.08" fill="#7a7a7a"/><rect x="204.75" y="0.00" width="1.71" height="1.71" fill="#8c8c8c"/><rect x="204.75" y="151.41" width="1.71" height="1.71" fill="#8c8c8c"/><rect x="244.79" y="0.00" width="1.71" height="1.71" fill="#8c8c8c"/><rect x="244.79" y="151.41" width="1.71" height="1.71" fill="#8c8c8c"/><rect x="283.29" y="123.02" width="1.71" height="1.71" fill="#8c8c8c"/><rect x="0" y="0" width="275.60" height="13.80" fill="#000"/><rect x="0" y="13.80" width="1.800" height="248.60" fill="#fafafa"/><text transform="scale(0.8805 1)" x="0.57 16.24 31.91 47.58 63.26 78.93 94.60 110.27 125.95 141.62 157.29 172.96 188.64 204.31 219.98 235.65 251.32 267.00 282.67 298.34" y="12.600" font-family="Liberation Mono,monospace" font-size="17.600" fill="#ececec" xml:space="preserve">SCORE 000000 LIVES 3</text></svg>
</div>
<div style="left:593.3px;top:86.2px;width:166px;height:283.6px;background:#f3f3f3;border-radius:3px;box-shadow:0 3px 9px rgba(0,0,0,.45),0 0 0 .5px rgba(80,80,80,.65);"></div>
<div style="left:593.3px;top:86.2px;width:166px;height:13px;background:#fbfbfb;border-radius:3px 3px 0 0;"></div>
<div style="left:593.3px;top:99.2px;width:166px;height:9px;background:#ffffff;"></div>
<div style="left:595.8px;top:89.8px;width:6.4px;height:5.6px;background:#0d6e68;border-radius:.6px;"></div>
<div style="left:596.8px;top:90.8px;width:1.5px;height:1.1px;background:#d9efc4;"></div>
<div style="left:598.8px;top:92.8px;width:2.5px;height:0.9px;background:#9fdc6a;"></div>
<span style="top:89.08px;line-height:6.76px;height:6.76px;font-size:5.2px;color:#3a3a3a;letter-spacing:-0.05px;left:605px;">Emulicious - Tilemap Viewer</span>
<div style="left:708.5px;top:91.2px;width:4.8px;height:0.55px;background:#555;"></div>
<div style="left:727.8px;top:88.9px;width:4.8px;height:4.8px;border:.5px solid #5a5a5a;border-radius:.5px;"></div>
<svg style="left:747.2px;top:88.9px;" width="4.8" height="4.8" viewBox="0 0 4.8 4.8"><path d="M.3.3 4.500 4.500M4.500.3.3 4.500" stroke="#444" stroke-width=".55"/></svg>
<span style="top:100.49px;line-height:7.02px;height:7.02px;font-size:5.4px;color:#333;letter-spacing:0.22px;left:595.3px;">View</span>
<div class="clip" style="left:593.3px;top:108.2px;width:166px;height:166px;background:#000;">
<svg style="left:0;top:0" width="166" height="166" viewBox="0 0 166 166"><path d="M39.30 47.42L52.91 47.42" stroke="#5e5e5e" stroke-width="0.50"/><path d="M46.10 42.36L46.10 52.48" stroke="#5e5e5e" stroke-width="0.50"/><path d="M43.12 47.42L49.09 47.42" stroke="#9a9a9a" stroke-width="0.65"/><path d="M46.10 44.96L46.10 49.89" stroke="#9a9a9a" stroke-width="0.65"/><circle cx="46.10" cy="47.42" r="1.88" fill="#8a8a8a" opacity="0.5"/><circle cx="46.10" cy="47.42" r="1.30" fill="#e0e0e0" opacity="0.8"/><circle cx="46.10" cy="47.42" r="0.94" fill="#ffffff" opacity="1"/><path d="M39.30 104.49L52.91 104.49" stroke="#5e5e5e" stroke-width="0.50"/><path d="M46.10 99.43L46.10 109.54" stroke="#5e5e5e" stroke-width="0.50"/><path d="M43.12 104.49L49.09 104.49" stroke="#9a9a9a" stroke-width="0.65"/><path d="M46.10 102.02L46.10 106.95" stroke="#9a9a9a" stroke-width="0.65"/><circle cx="46.10" cy="104.49" r="1.88" fill="#8a8a8a" opacity="0.5"/><circle cx="46.10" cy="104.49" r="1.30" fill="#e0e0e0" opacity="0.8"/><circle cx="46.10" cy="104.49" r="0.94" fill="#ffffff" opacity="1"/><path d="M39.30 161.55L52.91 161.55" stroke="#5e5e5e" stroke-width="0.50"/><path d="M46.10 156.49L46.10 166.61" stroke="#5e5e5e" stroke-width="0.50"/><path d="M43.12 161.55L49.09 161.55" stroke="#9a9a9a" stroke-width="0.65"/><path d="M46.10 159.08L46.10 164.01" stroke="#9a9a9a" stroke-width="0.65"/><circle cx="46.10" cy="161.55" r="1.88" fill="#8a8a8a" opacity="0.5"/><circle cx="46.10" cy="161.55" r="1.30" fill="#e0e0e0" opacity="0.8"/><circle cx="46.10" cy="161.55" r="0.94" fill="#ffffff" opacity="1"/><path d="M39.30 14.29L45.00 14.29" stroke="#5a5a5a" stroke-width="0.50"/><path d="M42.02 10.66L42.02 17.92" stroke="#5a5a5a" stroke-width="0.50"/><path d="M40.72 14.29L43.32 14.29" stroke="#9a9a9a" stroke-width="0.60"/><path d="M42.02 12.73L42.02 15.84" stroke="#9a9a9a" stroke-width="0.60"/><circle cx="42.02" cy="14.29" r="1.23" fill="#808080" opacity="0.5"/><circle cx="42.02" cy="14.29" r="0.75" fill="#f4f4f4" opacity="1"/><path d="M39.30 71.35L45.00 71.35" stroke="#5a5a5a" stroke-width="0.50"/><path d="M42.02 67.72L42.02 74.98" stroke="#5a5a5a" stroke-width="0.50"/><path d="M40.72 71.35L43.32 71.35" stroke="#9a9a9a" stroke-width="0.60"/><path d="M42.02 69.79L42.02 72.91" stroke="#9a9a9a" stroke-width="0.60"/><circle cx="42.02" cy="71.35" r="1.23" fill="#808080" opacity="0.5"/><circle cx="42.02" cy="71.35" r="0.75" fill="#f4f4f4" opacity="1"/><path d="M39.30 128.41L45.00 128.41" stroke="#5a5a5a" stroke-width="0.50"/><path d="M42.02 124.78L42.02 132.04" stroke="#5a5a5a" stroke-width="0.50"/><path d="M40.72 128.41L43.32 128.41" stroke="#9a9a9a" stroke-width="0.60"/><path d="M42.02 126.86L42.02 129.97" stroke="#9a9a9a" stroke-width="0.60"/><circle cx="42.02" cy="128.41" r="1.23" fill="#808080" opacity="0.5"/><circle cx="42.02" cy="128.41" r="0.75" fill="#f4f4f4" opacity="1"/><path d="M20.19 9.94L23.39 9.94" stroke="#747474" stroke-width="0.58"/><path d="M21.79 8.34L21.79 11.54" stroke="#747474" stroke-width="0.58"/><path d="M20.19 67.01L23.39 67.01" stroke="#747474" stroke-width="0.58"/><path d="M21.79 65.41L21.79 68.60" stroke="#747474" stroke-width="0.58"/><path d="M20.19 124.07L23.39 124.07" stroke="#747474" stroke-width="0.58"/><path d="M21.79 122.47L21.79 125.67" stroke="#747474" stroke-width="0.58"/><path d="M12.31 33.42L15.70 33.42" stroke="#6e6e6e" stroke-width="0.58"/><path d="M14.01 31.72L14.01 35.11" stroke="#6e6e6e" stroke-width="0.58"/><circle cx="14.01" cy="33.42" r="0.71" fill="#d8d8d8" opacity="1"/><path d="M12.31 90.48L15.70 90.48" stroke="#6e6e6e" stroke-width="0.58"/><path d="M14.01 88.79L14.01 92.17" stroke="#6e6e6e" stroke-width="0.58"/><circle cx="14.01" cy="90.48" r="0.71" fill="#d8d8d8" opacity="1"/><path d="M12.31 147.54L15.70 147.54" stroke="#6e6e6e" stroke-width="0.58"/><path d="M14.01 145.85L14.01 149.23" stroke="#6e6e6e" stroke-width="0.58"/><circle cx="14.01" cy="147.54" r="0.71" fill="#d8d8d8" opacity="1"/><rect x="30.40" y="44.94" width="0.94" height="0.94" fill="#8c8c8c"/><rect x="30.40" y="102.00" width="0.94" height="0.94" fill="#8c8c8c"/><rect x="30.40" y="159.07" width="0.94" height="0.94" fill="#8c8c8c"/><rect x="28.71" y="-1.49" width="0.94" height="0.94" fill="#8c8c8c"/><rect x="28.71" y="55.58" width="0.94" height="0.94" fill="#8c8c8c"/><rect x="28.71" y="112.64" width="0.94" height="0.94" fill="#8c8c8c"/><rect x="88.11" y="51.43" width="0.94" height="0.94" fill="#8c8c8c"/><rect x="88.11" y="108.49" width="0.94" height="0.94" fill="#8c8c8c"/><rect x="88.11" y="165.55" width="0.94" height="0.94" fill="#8c8c8c"/><rect x="99.13" y="-3.31" width="0.94" height="2.26" fill="#8c8c8c"/><rect x="99.13" y="53.75" width="0.94" height="2.26" fill="#8c8c8c"/><rect x="99.13" y="110.81" width="0.94" height="2.26" fill="#8c8c8c"/><rect x="99.13" y="167.88" width="0.94" height="2.26" fill="#8c8c8c"/><rect x="7.12" y="12.78" width="0.94" height="0.94" fill="#8c8c8c"/><rect x="7.12" y="69.84" width="0.94" height="0.94" fill="#8c8c8c"/><rect x="7.12" y="126.90" width="0.94" height="0.94" fill="#8c8c8c"/><rect x="16.07" y="11.35" width="0.94" height="0.94" fill="#8c8c8c"/><rect x="16.07" y="68.42" width="0.94" height="0.94" fill="#8c8c8c"/><rect x="16.07" y="125.48" width="0.94" height="0.94" fill="#8c8c8c"/><rect x="60.50" y="17.85" width="1.69" height="1.69" fill="#7a7a7a"/><rect x="60.50" y="74.91" width="1.69" height="1.69" fill="#7a7a7a"/><rect x="60.50" y="131.98" width="1.69" height="1.69" fill="#7a7a7a"/><rect x="41.55" y="29.19" width="0.94" height="0.94" fill="#8c8c8c"/><rect x="41.55" y="86.25" width="0.94" height="0.94" fill="#8c8c8c"/><rect x="41.55" y="143.31" width="0.94" height="0.94" fill="#8c8c8c"/><rect x="14.83" y="38.91" width="0.94" height="0.94" fill="#8c8c8c"/><rect x="14.83" y="95.97" width="0.94" height="0.94" fill="#8c8c8c"/><rect x="14.83" y="153.04" width="0.94" height="0.94" fill="#8c8c8c"/><rect x="-0.20" y="40.09" width="1.69" height="1.69" fill="#7a7a7a"/><rect x="-0.20" y="97.15" width="1.69" height="1.69" fill="#7a7a7a"/><rect x="-0.20" y="154.22" width="1.69" height="1.69" fill="#7a7a7a"/><rect x="84.73" y="4.93" width="0.94" height="0.94" fill="#8c8c8c"/><rect x="84.73" y="62.00" width="0.94" height="0.94" fill="#8c8c8c"/><rect x="84.73" y="119.06" width="0.94" height="0.94" fill="#8c8c8c"/><rect x="85.51" y="6.81" width="0.94" height="0.94" fill="#8c8c8c"/><rect x="85.51" y="63.88" width="0.94" height="0.94" fill="#8c8c8c"/><rect x="85.51" y="120.94" width="0.94" height="0.94" fill="#8c8c8c"/><rect x="79.42" y="32.68" width="0.94" height="2.26" fill="#8c8c8c"/><rect x="79.42" y="89.74" width="0.94" height="2.26" fill="#8c8c8c"/><rect x="79.42" y="146.80" width="0.94" height="2.26" fill="#8c8c8c"/><rect x="73.53" y="36.27" width="1.69" height="1.69" fill="#7a7a7a"/><rect x="73.53" y="93.33" width="1.69" height="1.69" fill="#7a7a7a"/><rect x="73.53" y="150.39" width="1.69" height="1.69" fill="#7a7a7a"/><rect x="76.76" y="36.97" width="0.94" height="0.94" fill="#8c8c8c"/><rect x="76.76" y="94.03" width="0.94" height="0.94" fill="#8c8c8c"/><rect x="76.76" y="151.09" width="0.94" height="0.94" fill="#8c8c8c"/><rect x="91.93" y="36.97" width="0.94" height="0.94" fill="#8c8c8c"/><rect x="91.93" y="94.03" width="0.94" height="0.94" fill="#8c8c8c"/><rect x="91.93" y="151.09" width="0.94" height="0.94" fill="#8c8c8c"/><path d="M128.92 36.46L133.05 36.46" stroke="#8a8a8a" stroke-width="0.58"/><path d="M130.98 34.40L130.98 38.53" stroke="#8a8a8a" stroke-width="0.58"/><circle cx="130.98" cy="36.46" r="1.18" fill="#ffffff" opacity="1"/><path d="M128.92 93.53L133.05 93.53" stroke="#8a8a8a" stroke-width="0.58"/><path d="M130.98 91.46L130.98 95.60" stroke="#8a8a8a" stroke-width="0.58"/><circle cx="130.98" cy="93.53" r="1.18" fill="#ffffff" opacity="1"/><path d="M128.92 150.59L133.05 150.59" stroke="#8a8a8a" stroke-width="0.58"/><path d="M130.98 148.52L130.98 152.66" stroke="#8a8a8a" stroke-width="0.58"/><circle cx="130.98" cy="150.59" r="1.18" fill="#ffffff" opacity="1"/><rect x="130.14" y="41.97" width="1.69" height="1.69" fill="#7a7a7a"/><rect x="130.14" y="99.04" width="1.69" height="1.69" fill="#7a7a7a"/><rect x="130.14" y="156.10" width="1.69" height="1.69" fill="#7a7a7a"/><path d="M144.02 53.97L148.16 53.97" stroke="#8a8a8a" stroke-width="0.58"/><path d="M146.09 51.90L146.09 56.04" stroke="#8a8a8a" stroke-width="0.58"/><circle cx="146.09" cy="53.97" r="1.18" fill="#ffffff" opacity="1"/><path d="M144.02 111.03L148.16 111.03" stroke="#8a8a8a" stroke-width="0.58"/><path d="M146.09 108.97L146.09 113.10" stroke="#8a8a8a" stroke-width="0.58"/><circle cx="146.09" cy="111.03" r="1.18" fill="#ffffff" opacity="1"/><path d="M144.02 168.10L148.16 168.10" stroke="#8a8a8a" stroke-width="0.58"/><path d="M146.09 166.03L146.09 170.17" stroke="#8a8a8a" stroke-width="0.58"/><circle cx="146.09" cy="168.10" r="1.18" fill="#ffffff" opacity="1"/><circle cx="145.12" cy="17.66" r="0.94" fill="#d8d8d8" opacity="1"/><circle cx="145.12" cy="74.72" r="0.94" fill="#d8d8d8" opacity="1"/><circle cx="145.12" cy="131.78" r="0.94" fill="#d8d8d8" opacity="1"/><circle cx="146.55" cy="20.90" r="0.94" fill="#d8d8d8" opacity="1"/><circle cx="146.55" cy="77.96" r="0.94" fill="#d8d8d8" opacity="1"/><circle cx="146.55" cy="135.03" r="0.94" fill="#d8d8d8" opacity="1"/><path d="M111.78 14.29L115.17 14.29" stroke="#6e6e6e" stroke-width="0.58"/><path d="M113.48 12.60L113.48 15.98" stroke="#6e6e6e" stroke-width="0.58"/><circle cx="113.48" cy="14.29" r="0.71" fill="#d8d8d8" opacity="1"/><path d="M111.78 71.35L115.17 71.35" stroke="#6e6e6e" stroke-width="0.58"/><path d="M113.48 69.66L113.48 73.04" stroke="#6e6e6e" stroke-width="0.58"/><circle cx="113.48" cy="71.35" r="0.71" fill="#d8d8d8" opacity="1"/><path d="M111.78 128.41L115.17 128.41" stroke="#6e6e6e" stroke-width="0.58"/><path d="M113.48 126.72L113.48 130.10" stroke="#6e6e6e" stroke-width="0.58"/><circle cx="113.48" cy="128.41" r="0.71" fill="#d8d8d8" opacity="1"/><rect x="120.14" y="14.60" width="0.94" height="0.94" fill="#8c8c8c"/><rect x="120.14" y="71.66" width="0.94" height="0.94" fill="#8c8c8c"/><rect x="120.14" y="128.72" width="0.94" height="0.94" fill="#8c8c8c"/><rect x="141.54" y="14.60" width="0.94" height="0.94" fill="#8c8c8c"/><rect x="141.54" y="71.66" width="0.94" height="0.94" fill="#8c8c8c"/><rect x="141.54" y="128.72" width="0.94" height="0.94" fill="#8c8c8c"/><rect x="127.92" y="39.24" width="0.94" height="0.94" fill="#8c8c8c"/><rect x="127.92" y="96.30" width="0.94" height="0.94" fill="#8c8c8c"/><rect x="127.92" y="153.36" width="0.94" height="0.94" fill="#8c8c8c"/><rect x="137.65" y="37.94" width="0.94" height="0.94" fill="#8c8c8c"/><rect x="137.65" y="95.00" width="0.94" height="0.94" fill="#8c8c8c"/><rect x="137.65" y="152.06" width="0.94" height="0.94" fill="#8c8c8c"/><rect x="155.15" y="47.02" width="0.94" height="0.94" fill="#8c8c8c"/><rect x="155.15" y="104.08" width="0.94" height="0.94" fill="#8c8c8c"/><rect x="155.15" y="161.14" width="0.94" height="0.94" fill="#8c8c8c"/><rect x="106.52" y="26.27" width="0.94" height="0.94" fill="#8c8c8c"/><rect x="106.52" y="83.33" width="0.94" height="0.94" fill="#8c8c8c"/><rect x="106.52" y="140.39" width="0.94" height="0.94" fill="#8c8c8c"/><rect x="159.05" y="8.11" width="0.94" height="0.94" fill="#8c8c8c"/><rect x="159.05" y="65.17" width="0.94" height="0.94" fill="#8c8c8c"/><rect x="159.05" y="122.24" width="0.94" height="0.94" fill="#8c8c8c"/><rect x="116.25" y="48.96" width="0.94" height="0.94" fill="#8c8c8c"/><rect x="116.25" y="106.03" width="0.94" height="0.94" fill="#8c8c8c"/><rect x="116.25" y="163.09" width="0.94" height="0.94" fill="#8c8c8c"/><rect x="152.56" y="32.75" width="0.94" height="0.94" fill="#8c8c8c"/><rect x="152.56" y="89.81" width="0.94" height="0.94" fill="#8c8c8c"/><rect x="152.56" y="146.88" width="0.94" height="0.94" fill="#8c8c8c"/><rect x="-0.50" y="37.81" width="105.05" height="93.38" fill="none" stroke="#f4f4f4" stroke-width=".9"/></svg>
</div>
<span style="top:281.68px;line-height:6.7px;height:6.7px;font-size:5.15px;color:#333;letter-spacing:0.18px;left:596.5px;">Base Address:</span>
<div style="left:647.3px;top:279.7px;width:108.4px;height:10.3px;background:#ffffff;border:.5px solid #dadada;border-bottom:.6px solid #bcbcbc;border-radius:1.300px;"></div>
<span style="top:281.78px;line-height:6.7px;height:6.7px;font-size:5.15px;color:#333;letter-spacing:0.18px;left:649px;">Auto</span>
<svg style="left:749.3px;top:283.5px;" width="4.4" height="3" viewBox="0 0 4.4 3"><path d="M.5.500 2.200 2.200 3.900.500" fill="none" stroke="#555" stroke-width=".55"/></svg>
<span style="top:292.58px;line-height:6.7px;height:6.7px;font-size:5.15px;color:#333;letter-spacing:0.24px;left:596.5px;">Tile Base Address:</span>
<div style="left:647.3px;top:290.6px;width:108.4px;height:10.3px;background:#ffffff;border:.5px solid #dadada;border-bottom:.6px solid #bcbcbc;border-radius:1.300px;"></div>
<span style="top:292.68px;line-height:6.7px;height:6.7px;font-size:5.15px;color:#333;letter-spacing:0.18px;left:649px;">Auto</span>
<svg style="left:749.3px;top:294.4px;" width="4.4" height="3" viewBox="0 0 4.4 3"><path d="M.5.500 2.200 2.200 3.900.500" fill="none" stroke="#555" stroke-width=".55"/></svg>
<div style="left:649.6px;top:304px;width:5.2px;height:5.2px;background:#1565c8;border-radius:1px;"></div>
<svg style="left:650.3px;top:305px;" width="4" height="3.4" viewBox="0 0 4 3.4"><path d="M.5 1.700 1.600 2.800 3.500.600" fill="none" stroke="#fff" stroke-width=".7"/></svg>
<span style="top:303.48px;line-height:6.7px;height:6.7px;font-size:5.15px;color:#333;letter-spacing:0.12px;left:656.8px;">Auto Palette</span>
<span style="top:314.18px;line-height:6.7px;height:6.7px;font-size:5.15px;color:#333;letter-spacing:0.3px;left:596.5px;">Display / Mode:</span>
<span style="top:314.18px;line-height:6.7px;height:6.7px;font-size:5.15px;color:#333;letter-spacing:0.14px;left:647.6px;">on</span>
<span style="top:325.08px;line-height:6.7px;height:6.7px;font-size:5.15px;color:#333;letter-spacing:0.29px;left:596.5px;">Horiz. / Vert. scroll:</span>
<span style="top:325.08px;line-height:6.7px;height:6.7px;font-size:5.15px;color:#333;letter-spacing:0.33px;left:647.6px;">$00 / $38 | 0 / 56</span>
<span style="top:335.88px;line-height:6.7px;height:6.7px;font-size:5.15px;color:#333;letter-spacing:0.25px;left:596.5px;">Index:</span>
<span style="top:335.88px;line-height:6.7px;height:6.7px;font-size:5.15px;color:#333;letter-spacing:0.28px;left:647.6px;">0 ($0) @ VRAM 00:9800 | row: 0 | colu...</span>
<span style="top:346.58px;line-height:6.7px;height:6.7px;font-size:5.15px;color:#333;letter-spacing:0.22px;left:596.5px;">Tile Index:</span>
<span style="top:346.58px;line-height:6.7px;height:6.7px;font-size:5.15px;color:#333;letter-spacing:0.23px;left:647.6px;">308 ($34) @ VRAM 00:9340 | Source: M...</span>
<div style="left:604.8px;top:356.8px;width:32.8px;height:7.4px;border:.5px dotted #333;"></div>
<div style="left:598.8px;top:357.9px;width:5.2px;height:5.2px;background:#1565c8;border-radius:1px;"></div>
<svg style="left:599.5px;top:358.9px;" width="4" height="3.4" viewBox="0 0 4 3.4"><path d="M.5 1.700 1.600 2.800 3.500.600" fill="none" stroke="#fff" stroke-width=".7"/></svg>
<span style="top:357.38px;line-height:6.7px;height:6.7px;font-size:5.15px;color:#333;letter-spacing:0.08px;left:605.6px;text-decoration:underline;text-decoration-thickness:.4px;">Auto Refresh</span>
<div style="left:647.3px;top:355.4px;width:108.4px;height:10.3px;background:#fdfdfd;border:.5px solid #e0e0e0;border-bottom:.6px solid #cfcfcf;border-radius:1.500px;"></div>
<span style="top:357.38px;line-height:6.7px;height:6.7px;font-size:5.15px;color:#333;letter-spacing:0.21px;left:691.75px;">Refresh</span>
<div style="left:0px;top:445.5px;width:828px;height:20.5px;background:#1b1b1c;"></div>
<div style="left:0px;top:445.3px;width:828px;height:0.5px;background:#2c2c2e;"></div>
<svg style="left:8px;top:449px;" width="12" height="12" viewBox="0 0 12 12"><path d="M1 3.200 5.500 1.400 8.600 2.600 6.400 4.600 8.800 6 6 8.200 1.200 8 3.400 5.800 .8 5z" fill="#f2a01e"/><path d="M3.600 10.800 5.100 9.400 6.600 10.800" fill="none" stroke="#4fb04f" stroke-width=".8"/></svg>
<div style="left:14px;top:448.2px;width:6px;height:6px;background:#ee9a94;border-radius:50%;"></div>
<span style="top:449.8px;line-height:4.68px;height:4.68px;font-size:3.6px;color:#7a2b20;font-weight:700;left:16px;">1</span>
<span style="top:450.19px;line-height:5.98px;height:5.98px;font-size:4.6px;color:#e6e6e6;letter-spacing:0.01px;left:21.6px;">EUR/GBP</span>
<span style="top:457.19px;line-height:5.98px;height:5.98px;font-size:4.6px;color:#4fb04f;letter-spacing:0.3px;left:21.6px;">+0,25%</span>
<div style="left:284.8px;top:450.8px;width:4.8px;height:4.8px;background:#52c4f7;border-radius:.6px;"></div>
<div style="left:290.1px;top:450.8px;width:4.8px;height:4.8px;background:#3db4f2;border-radius:.6px;"></div>
<div style="left:284.8px;top:456.1px;width:4.8px;height:4.8px;background:#33a8ee;border-radius:.6px;"></div>
<div style="left:290.1px;top:456.1px;width:4.8px;height:4.8px;background:#2098e6;border-radius:.6px;"></div>
<div style="left:300.8px;top:450.3px;width:94.4px;height:12px;background:#3a3a3c;border-radius:6px;border:.5px solid #4a4a4d;"></div>
<svg style="left:305.3px;top:453.3px;" width="6.4" height="6.4" viewBox="0 0 6.4 6.4"><circle cx="2.700" cy="2.700" r="2" fill="none" stroke="#f0f0f0" stroke-width=".8"/><path d="M4.200 4.200 5.900 5.900" stroke="#f0f0f0" stroke-width=".8"/></svg>
<span style="top:453.39px;line-height:6.89px;height:6.89px;font-size:5.3px;color:#e4e4e4;letter-spacing:0.49px;left:316.6px;">Αναζήτηση</span>
<svg style="left:374.5px;top:451.5px;" width="18" height="9.6" viewBox="0 0 18 9.6"><path d="M2 3 4 1.800 7 2.500l5 .3 3 1.200 1.500 2.500-1 2.500-1.500-.5L13 6.500 8 7 6.500 9 5 8.500 5.500 6 3 5z" fill="#c8752a"/><path d="M7 2.800 7.500 6.500M10 3l.2 3.500M12.500 3.500 12.200 6" stroke="#3a2510" stroke-width=".6"/><rect x="3" y="8.500" width="13" height="1" fill="#3f8f3a"/></svg>
<div style="left:403.3px;top:451.8px;width:6.8px;height:5.8px;background:#a9a9ad;border-radius:.8px;"></div>
<div style="left:400.8px;top:454px;width:6.8px;height:5.8px;background:#55555a;border-radius:.8px;border:.6px solid #e0e0e0;"></div>
<svg style="left:418.8px;top:450.3px;" width="11.6" height="11.6" viewBox="0 0 11.6 11.6"><path d="M1.200 3.500h9.200l-.5 6.500q-.1.800-.9.800H2.600q-.8 0-.9-.8z" fill="#f4f4f6"/><path d="M4 3.500V2.300Q4 1.200 5 1.200h1.600q1 0 1 1.100v1.200" fill="none" stroke="#d8d8dc" stroke-width=".8"/><rect x="3.700" y="5" width="1.900" height="1.900" fill="#f25022"/><rect x="6" y="5" width="1.900" height="1.900" fill="#7fba00"/><rect x="3.700" y="7.300" width="1.900" height="1.900" fill="#00a4ef"/><rect x="6" y="7.300" width="1.900" height="1.900" fill="#ffb900"/></svg>
<svg style="left:438px;top:450.5px;" width="11.6" height="11.6" viewBox="0 0 11.6 11.6"><rect x="1.400" y="1.400" width="8.800" height="8.800" fill="#d4d7dd" transform="rotate(14 5.800 5.800)"/><rect x="4.700" y="4.700" width="2.200" height="2.200" fill="#6d7077" transform="rotate(14 5.800 5.800)"/></svg>
<svg style="left:457px;top:450.3px;" width="11.6" height="11.6" viewBox="0 0 11.6 11.6"><circle cx="5.800" cy="5.800" r="5" fill="#1b8ad6"/><path d="M1 6.500C1.500 2.500 5 .8 7.500 1.200 10 1.700 11 4 10.700 5.500H5.200c0 2 1.800 3.600 4.800 3.100C8.500 10.700 5 11.300 3 9.700 1.700 8.700 1 7.500 1 6.500z" fill="#35c1f1"/><path d="M.9 6.800C2 9.800 5.500 11.300 8.500 9.900 6 10 4.300 8.300 4.600 6.200 3 5.500 1.500 5.800.9 6.800z" fill="#4ad66d"/><ellipse cx="6.600" cy="5.400" rx="2" ry="1.400" fill="#1b1b1c"/></svg>
<div style="left:460.8px;top:463px;width:4px;height:0.9px;background:#8e8e92;border-radius:.5px;"></div>
<svg style="left:476px;top:450.3px;" width="11.6" height="11.6" viewBox="0 0 11.6 11.6"><path d="M.8 2.200q0-.7.7-.7h2.800l1.100 1.300h4.700q.7 0 .7.700v5.800q0 .7-.7.7H1.500q-.7 0-.7-.7z" fill="#f5b921"/><path d="M.8 4.600h10v4.700q0 .7-.7.700H1.500q-.7 0-.7-.7z" fill="#ffd75e"/><rect x="3.200" y="7" width="5.200" height="2" fill="#2f7fd4"/></svg>
<svg style="left:494.8px;top:450.3px;" width="11.6" height="11.6" viewBox="0 0 11.6 11.6"><circle cx="5.800" cy="6" r="4.900" fill="#f3f3f5"/><rect x="3" y="5.300" width="2.600" height="1.200" rx=".6" fill="#36c5f0"/><rect x="5.300" y="3.200" width="1.200" height="2.600" rx=".6" fill="#2eb67d"/><rect x="6" y="5.700" width="2.600" height="1.200" rx=".6" fill="#ecb22e"/><rect x="5.100" y="6.400" width="1.200" height="2.600" rx=".6" fill="#e01e5a"/></svg>
<div style="left:501.6px;top:449.2px;width:5.2px;height:5.2px;background:#e2454b;border-radius:50%;"></div>
<span style="top:450.4px;line-height:4.42px;height:4.42px;font-size:3.4px;color:#fff;font-weight:700;left:503.25px;">1</span>
<div style="left:498.6px;top:463px;width:4px;height:0.9px;background:#8e8e92;border-radius:.5px;"></div>
<svg style="left:514px;top:450.5px;" width="11.2" height="11.2" viewBox="0 0 24 24"><path d="M17.200 1.200 8.300 9.400 4 6.100 2 7.100v9.800l2 1 4.300-3.300 8.900 8.200 4.800-2V3.200z" fill="#2a90d8"/><path d="M17.200 6.800 10.600 12l6.600 5.200zM4.200 9.300v5.400L7 12z" fill="#1b1b1c"/><path d="M17.200 1.200 22 3.200v17.600l-4.800 2z" fill="#46aef0"/></svg>
<div style="left:517.5px;top:463px;width:4px;height:0.9px;background:#8e8e92;border-radius:.5px;"></div>
<div style="left:528.8px;top:447.5px;width:20.4px;height:17.3px;background:#2b2b2d;border-radius:2px;border:.5px solid #343437;"></div>
<div style="left:533.8px;top:451px;width:10.4px;height:9px;background:#0e6b66;border-radius:1px;"></div>
<div style="left:535.5px;top:452.5px;width:2.2px;height:1.5px;background:#d7ecc0;"></div>
<div style="left:539px;top:455.6px;width:3.8px;height:1.2px;background:#9fdc6a;"></div>
<div style="left:534.8px;top:462.3px;width:8.5px;height:1.1px;background:#e8705a;border-radius:.6px;"></div>
<svg style="left:718.3px;top:453.3px;" width="6.4" height="5" viewBox="0 0 6.4 5"><path d="M.8 3.800 3.200 1.300 5.600 3.800" fill="none" stroke="#f0f0f0" stroke-width=".8"/></svg>
<span style="top:454.29px;line-height:6.11px;height:6.11px;font-size:4.7px;color:#f0f0f0;letter-spacing:0.1px;left:732.8px;">ENG</span>
<svg style="left:750.3px;top:452.5px;" width="8.4" height="7" viewBox="0 0 8.4 7"><path d="M.5 2.500Q4.200-.8 7.900 2.500L4.200 6.500z" fill="#9a9a9a" stroke="#e8e8e8" stroke-width=".5"/></svg>
<svg style="left:760.5px;top:452.5px;" width="7.4" height="7" viewBox="0 0 7.4 7"><path d="M.5 2.500h1.500L3.800.8v5.400L2 4.500H.5z" fill="#8a8a8a" stroke="#e8e8e8" stroke-width=".5"/><path d="M5 2.200q.8 1.300 0 2.600M6 1.300q1.500 2.200 0 4.400" fill="none" stroke="#f0f0f0" stroke-width=".5"/></svg>
<svg style="left:770.5px;top:452.8px;" width="9" height="6.4" viewBox="0 0 9 6.4"><rect x=".4" y="1" width="7.200" height="4.400" rx="1" fill="none" stroke="#f0f0f0" stroke-width=".7"/><rect x="1.200" y="1.800" width="3.600" height="2.800" fill="#f0f0f0"/><rect x="7.900" y="2.400" width=".8" height="1.600" fill="#f0f0f0"/></svg>
<span style="top:450.29px;line-height:6.11px;height:6.11px;font-size:4.7px;color:#f0f0f0;letter-spacing:0.38px;left:791.8px;">2:09 μμ</span>
<span style="top:457.59px;line-height:6.11px;height:6.11px;font-size:4.7px;color:#f0f0f0;letter-spacing:0.4px;left:785.8px;">16/6/2024</span>
<svg style="left:811.8px;top:452.3px;" width="7" height="7.6" viewBox="0 0 7 7.6"><path d="M3.500.600C1.900.600 1.600 2 1.600 3.300 1.600 4.600.700 5.200.700 5.500H6.300C6.300 5.200 5.400 4.600 5.400 3.300 5.400 2 5.100.600 3.500.600z" fill="#e9967a"/><circle cx="3.500" cy="6.400" r=".8" fill="#e9967a"/></svg>
</div></body></html>
